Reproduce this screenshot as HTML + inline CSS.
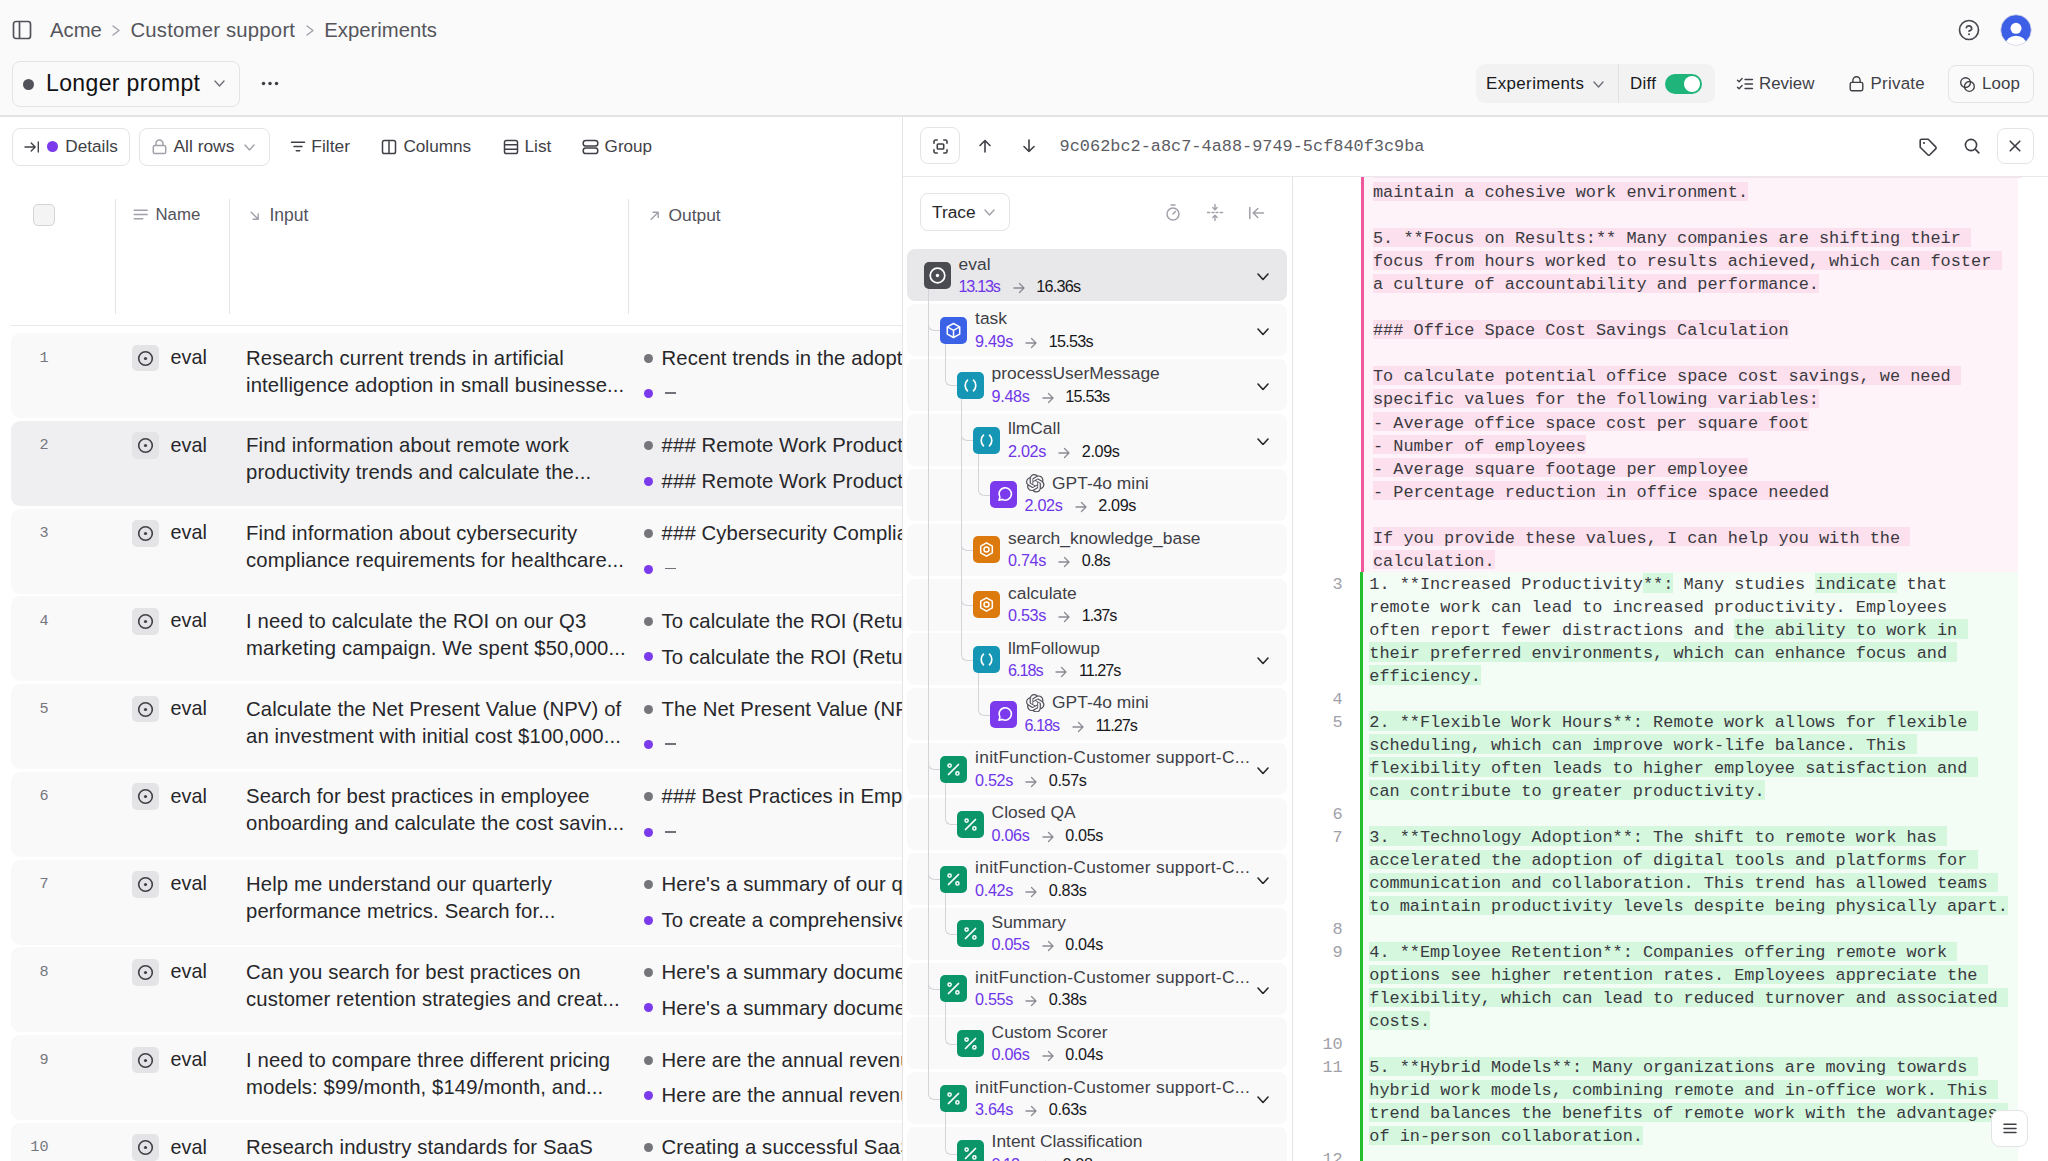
<!DOCTYPE html><html><head><meta charset="utf-8"><style>
html,body{margin:0;padding:0;width:2048px;height:1161px;overflow:hidden;background:#fff;}
.t{position:absolute;white-space:pre;line-height:1;}
.r{position:absolute;}
</style></head><body>

<div class="r" style="left:0.00px;top:0.00px;width:2048.00px;height:116.00px;background:#fafafa;border-radius:0px;"></div>
<div class="r" style="left:0.00px;top:115.00px;width:2048.00px;height:1.50px;background:#e4e4e7;border-radius:0px;"></div>
<svg class="r" style="left:12.00px;top:20.00px;" width="20.00" height="20.00" viewBox="0 0 20 20" fill="none"><rect x="1.5" y="1.5" width="17" height="17" rx="2.5" stroke="#52525b" stroke-width="1.7"/><line x1="7.5" y1="1.5" x2="7.5" y2="18.5" stroke="#52525b" stroke-width="1.7"/></svg>
<div class="t" style="left:50.00px;top:19.54px;font-size:20.30px;color:#55555c;font-family:'Liberation Sans',sans-serif;font-weight:400;">Acme</div>
<svg class="r" style="left:112.00px;top:25.00px;" width="8.00" height="11.00" viewBox="0 0 8 11" fill="none"><polyline points="1,1 7,5.5 1,10" stroke="#a1a1aa" stroke-width="1.4" fill="none" stroke-linecap="round" stroke-linejoin="round"/></svg>
<div class="t" style="left:130.40px;top:19.54px;font-size:20.30px;color:#55555c;font-family:'Liberation Sans',sans-serif;font-weight:400;letter-spacing:0.22766666666666613px;">Customer support</div>
<svg class="r" style="left:306.00px;top:25.00px;" width="8.00" height="11.00" viewBox="0 0 8 11" fill="none"><polyline points="1,1 7,5.5 1,10" stroke="#a1a1aa" stroke-width="1.4" fill="none" stroke-linecap="round" stroke-linejoin="round"/></svg>
<div class="t" style="left:324.30px;top:19.54px;font-size:20.30px;color:#55555c;font-family:'Liberation Sans',sans-serif;font-weight:400;">Experiments</div>
<svg class="r" style="left:1957.00px;top:18.00px;" width="24.00" height="24.00" viewBox="0 0 24 24" fill="none"><circle cx="12" cy="12" r="9.5" stroke="#46464d" stroke-width="1.65"/><path d="M9.3 9.6a2.8 2.8 0 0 1 5.4 1c0 1.8-2.7 2.5-2.7 2.5" stroke="#46464d" stroke-width="1.65" stroke-linecap="round" fill="none"/><circle cx="12" cy="16.3" r="1" fill="#46464d"/></svg>
<svg class="r" style="left:1999.50px;top:14.00px;" width="32.00" height="32.00" viewBox="0 0 32 32" fill="none"><defs><clipPath id="av"><circle cx="16" cy="16" r="15.3"/></clipPath></defs><circle cx="16" cy="16" r="15.3" fill="#3d5fe6"/><g clip-path="url(#av)"><circle cx="16" cy="14.3" r="5.5" fill="#fff"/><ellipse cx="16" cy="30.5" rx="10.5" ry="8.8" fill="#fff"/></g><circle cx="16" cy="16" r="15.3" stroke="#e4e4e7" stroke-width="0.8" fill="none"/></svg>
<div class="r" style="left:12.00px;top:60.50px;width:227.50px;height:46.00px;background:#fafafa;border-radius:8px;border:1.3px solid #e4e4e7;box-sizing:border-box;"></div>
<div class="r" style="left:23.00px;top:78.50px;width:11.00px;height:11.00px;background:#52525b;border-radius:6px;"></div>
<div class="t" style="left:46.00px;top:72.05px;font-size:23.00px;color:#111113;font-family:'Liberation Sans',sans-serif;font-weight:400;letter-spacing:0.3654166666666659px;">Longer prompt</div>
<svg class="r" style="left:214.00px;top:80.00px;" width="11.00" height="7.00" viewBox="0 0 11 7" fill="none"><polyline points="1,1 5.5,6 10,1" stroke="#71717a" stroke-width="1.4" fill="none" stroke-linecap="round" stroke-linejoin="round"/></svg>
<svg class="r" style="left:258.00px;top:79.00px;" width="24.00" height="9.00" viewBox="0 0 24 9" fill="none"><circle cx="5.5" cy="4.5" r="1.75" fill="#3f3f46"/><circle cx="12" cy="4.5" r="1.75" fill="#3f3f46"/><circle cx="18.5" cy="4.5" r="1.75" fill="#3f3f46"/></svg>
<div class="r" style="left:1475.50px;top:64.00px;width:239.50px;height:39.00px;background:#f2f2f3;border-radius:9px;"></div>
<div class="r" style="left:1617.50px;top:64.00px;width:1.50px;height:39.00px;background:#e1e1e4;border-radius:0px;"></div>
<div class="t" style="left:1486.00px;top:75.84px;font-size:16.90px;color:#18181b;font-family:'Liberation Sans',sans-serif;font-weight:400;letter-spacing:0.40360000000000157px;">Experiments</div>
<svg class="r" style="left:1592.50px;top:80.50px;" width="11.00" height="7.00" viewBox="0 0 11 7" fill="none"><polyline points="1,1 5.5,6 10,1" stroke="#71717a" stroke-width="1.4" fill="none" stroke-linecap="round" stroke-linejoin="round"/></svg>
<div class="t" style="left:1630.00px;top:75.84px;font-size:16.90px;color:#18181b;font-family:'Liberation Sans',sans-serif;font-weight:400;letter-spacing:0.301166666666667px;">Diff</div>
<div class="r" style="left:1664.50px;top:74.00px;width:37.00px;height:19.50px;background:#1fb57a;border-radius:10px;"></div>
<div class="r" style="left:1684.00px;top:76.00px;width:16.00px;height:16.00px;background:#ffffff;border-radius:8px;"></div>
<svg class="r" style="left:1736.00px;top:76.00px;" width="18.00" height="16.00" viewBox="0 0 18 16" fill="none"><path d="M1.5 4.2l1.6 1.6 3-3.3M1.5 11.2l1.6 1.6 3-3.3" stroke="#3f3f46" stroke-width="1.35" stroke-linecap="round" stroke-linejoin="round" fill="none"/><path d="M9 3.5h7.5M9 8h7.5M9 12.5h7.5" stroke="#3f3f46" stroke-width="1.35" stroke-linecap="round"/></svg>
<div class="t" style="left:1759.00px;top:75.84px;font-size:16.90px;color:#3f3f46;font-family:'Liberation Sans',sans-serif;font-weight:400;letter-spacing:0.01360000000000099px;">Review</div>
<svg class="r" style="left:1848.00px;top:75.00px;" width="17.00" height="17.00" viewBox="0 0 17 17" fill="none"><rect x="2.2" y="7.4" width="12.6" height="8.3" rx="1.6" stroke="#3f3f46" stroke-width="1.4"/><path d="M4.9 7.4V5.3a3.6 3.6 0 0 1 7.2 0v2.1" stroke="#3f3f46" stroke-width="1.4"/></svg>
<div class="t" style="left:1870.50px;top:75.84px;font-size:16.90px;color:#3f3f46;font-family:'Liberation Sans',sans-serif;font-weight:400;letter-spacing:0.2735000000000021px;">Private</div>
<div class="r" style="left:1947.50px;top:65.00px;width:86.50px;height:37.50px;background:#fafafa;border-radius:8px;border:1.3px solid #e4e4e7;box-sizing:border-box;"></div>
<svg class="r" style="left:1959.00px;top:76.00px;" width="17.00" height="17.00" viewBox="0 0 17 17" fill="none"><circle cx="6.6" cy="6.6" r="4.9" stroke="#3f3f46" stroke-width="1.35"/><circle cx="10.4" cy="10.4" r="4.9" stroke="#3f3f46" stroke-width="1.35"/></svg>
<div class="t" style="left:1982.00px;top:75.84px;font-size:16.90px;color:#3f3f46;font-family:'Liberation Sans',sans-serif;font-weight:400;letter-spacing:0.09916666666666647px;">Loop</div>
<div class="r" style="left:11.50px;top:128.00px;width:118.00px;height:37.50px;background:#fff;border-radius:8px;border:1.3px solid #e4e4e7;box-sizing:border-box;"></div>
<svg class="r" style="left:24.00px;top:140.50px;" width="16.00" height="12.00" viewBox="0 0 16 12" fill="none"><path d="M1 6h10M7.2 2l4 4-4 4" stroke="#3f3f46" stroke-width="1.35" stroke-linecap="round" stroke-linejoin="round" fill="none"/><path d="M14.3 1v10" stroke="#3f3f46" stroke-width="1.35" stroke-linecap="round"/></svg>
<div class="r" style="left:46.50px;top:141.00px;width:11.30px;height:11.30px;background:#7c3aed;border-radius:6px;"></div>
<div class="t" style="left:65.30px;top:138.28px;font-size:17.20px;color:#3f3f46;font-family:'Liberation Sans',sans-serif;font-weight:400;">Details</div>
<div class="r" style="left:139.00px;top:128.00px;width:130.50px;height:37.50px;background:#fff;border-radius:8px;border:1.3px solid #e4e4e7;box-sizing:border-box;"></div>
<svg class="r" style="left:151.00px;top:138.00px;" width="17.00" height="17.00" viewBox="0 0 17 17" fill="none"><rect x="2.3" y="7.6" width="12.4" height="8" rx="1.6" stroke="#a1a1aa" stroke-width="1.5"/><path d="M5 7.6V5.4a3.5 3.5 0 0 1 7 0v2.2" stroke="#a1a1aa" stroke-width="1.5"/></svg>
<div class="t" style="left:173.50px;top:138.11px;font-size:17.40px;color:#3f3f46;font-family:'Liberation Sans',sans-serif;font-weight:400;">All rows</div>
<svg class="r" style="left:244.00px;top:143.50px;" width="11.00" height="7.00" viewBox="0 0 11 7" fill="none"><polyline points="1,1 5.5,6 10,1" stroke="#a1a1aa" stroke-width="1.4" fill="none" stroke-linecap="round" stroke-linejoin="round"/></svg>
<svg class="r" style="left:289.50px;top:140.00px;" width="16.00" height="13.00" viewBox="0 0 16 13" fill="none"><path d="M1.5 2.2h13M4 6.5h8M6.3 10.8h3.4" stroke="#3f3f46" stroke-width="1.5" stroke-linecap="round"/></svg>
<div class="t" style="left:311.30px;top:138.11px;font-size:17.40px;color:#3f3f46;font-family:'Liberation Sans',sans-serif;font-weight:400;">Filter</div>
<svg class="r" style="left:380.50px;top:139.00px;" width="16.00" height="16.00" viewBox="0 0 16 16" fill="none"><rect x="1.5" y="1.5" width="13" height="13" rx="1.8" stroke="#3f3f46" stroke-width="1.5"/><path d="M8 1.5v13" stroke="#3f3f46" stroke-width="1.5"/></svg>
<div class="t" style="left:403.40px;top:138.28px;font-size:17.20px;color:#3f3f46;font-family:'Liberation Sans',sans-serif;font-weight:400;">Columns</div>
<svg class="r" style="left:502.50px;top:139.00px;" width="16.00" height="16.00" viewBox="0 0 16 16" fill="none"><rect x="1.5" y="1.5" width="13" height="13" rx="1.8" stroke="#3f3f46" stroke-width="1.5"/><path d="M1.5 5.8h13M1.5 10.2h13" stroke="#3f3f46" stroke-width="1.5"/></svg>
<div class="t" style="left:524.50px;top:138.19px;font-size:17.30px;color:#3f3f46;font-family:'Liberation Sans',sans-serif;font-weight:400;">List</div>
<svg class="r" style="left:582.00px;top:139.00px;" width="17.00" height="16.00" viewBox="0 0 17 16" fill="none"><rect x="1.2" y="1.5" width="14.6" height="5.6" rx="2.6" stroke="#3f3f46" stroke-width="1.5"/><rect x="1.2" y="8.9" width="14.6" height="5.6" rx="2.6" stroke="#3f3f46" stroke-width="1.5"/></svg>
<div class="t" style="left:604.60px;top:138.37px;font-size:17.10px;color:#3f3f46;font-family:'Liberation Sans',sans-serif;font-weight:400;">Group</div>
<div class="r" style="left:33.00px;top:204.30px;width:21.50px;height:21.30px;background:#f4f4f5;border-radius:5px;border:1.3px solid #d4d4d8;box-sizing:border-box;"></div>
<div class="r" style="left:115.00px;top:199.00px;width:1.30px;height:115.00px;background:#e4e4e7;border-radius:0px;"></div>
<div class="r" style="left:229.00px;top:199.00px;width:1.30px;height:115.00px;background:#e4e4e7;border-radius:0px;"></div>
<div class="r" style="left:628.00px;top:199.00px;width:1.30px;height:115.00px;background:#e4e4e7;border-radius:0px;"></div>
<svg class="r" style="left:133.00px;top:208.00px;" width="16.00" height="13.00" viewBox="0 0 16 13" fill="none"><path d="M1.2 2.2h13M1.2 6.5h13M1.2 10.8h8.5" stroke="#a1a1aa" stroke-width="1.5" stroke-linecap="round"/></svg>
<div class="t" style="left:155.50px;top:207.22px;font-size:16.80px;color:#52525b;font-family:'Liberation Sans',sans-serif;font-weight:400;">Name</div>
<svg class="r" style="left:250.00px;top:211.00px;" width="10.00" height="9.00" viewBox="0 0 10 9" fill="none"><path d="M1.2 1.2l7 7M8.2 3v5.2H3" stroke="#a1a1aa" stroke-width="1.4" stroke-linecap="round" stroke-linejoin="round" fill="none"/></svg>
<div class="t" style="left:269.40px;top:206.62px;font-size:17.50px;color:#52525b;font-family:'Liberation Sans',sans-serif;font-weight:400;">Input</div>
<svg class="r" style="left:649.50px;top:211.00px;" width="10.00" height="9.00" viewBox="0 0 10 9" fill="none"><path d="M1.2 8.2l7-7M3 1.2h5.2v5.2" stroke="#a1a1aa" stroke-width="1.4" stroke-linecap="round" stroke-linejoin="round" fill="none"/></svg>
<div class="t" style="left:668.50px;top:206.71px;font-size:17.40px;color:#52525b;font-family:'Liberation Sans',sans-serif;font-weight:400;">Output</div>
<div class="r" style="left:11.00px;top:325.00px;width:891.00px;height:1.30px;background:#e9e9ec;border-radius:0px;"></div>
<div class="r" style="left:0;top:326px;width:902px;height:835px;overflow:hidden;">
<div class="r" style="left:11.00px;top:7.20px;width:909.00px;height:84.90px;background:#f9f9fa;border-radius:9px;"></div>
<div class="t" style="left:39.48px;top:24.65px;font-size:15.20px;color:#76767e;font-family:'Liberation Mono',monospace;font-weight:400;">1</div>
<div class="r" style="left:131.80px;top:18.70px;width:26.80px;height:26.80px;background:#e4e4e7;border-radius:5px;"></div>
<svg class="r" style="left:136.70px;top:23.60px;" width="17.00" height="17.00" viewBox="0 0 17 17" fill="none"><circle cx="8.5" cy="8.5" r="6.8" stroke="#3f3f46" stroke-width="1.6"/><circle cx="8.5" cy="8.5" r="1.6" fill="#3f3f46"/></svg>
<div class="t" style="left:170.60px;top:21.97px;font-size:19.80px;color:#27272a;font-family:'Liberation Sans',sans-serif;font-weight:400;">eval</div>
<div class="t" style="left:246.00px;top:21.55px;font-size:20.30px;color:#27272a;font-family:'Liberation Sans',sans-serif;font-weight:400;letter-spacing:0.12px;">Research current trends in artificial</div>
<div class="t" style="left:246.00px;top:48.64px;font-size:20.30px;color:#27272a;font-family:'Liberation Sans',sans-serif;font-weight:400;letter-spacing:0.12px;">intelligence adoption in small businesse...</div>
<div class="r" style="left:644.00px;top:27.70px;width:9.00px;height:9.00px;background:#75757c;border-radius:5px;"></div>
<div class="t" style="left:661.60px;top:21.55px;font-size:20.30px;color:#27272a;font-family:'Liberation Sans',sans-serif;font-weight:400;letter-spacing:0.12px;">Recent trends in the adoption of artificial</div>
<div class="r" style="left:644.00px;top:63.20px;width:9.00px;height:9.00px;background:#7c3aed;border-radius:5px;"></div>
<div class="r" style="left:665.00px;top:66.40px;width:11.00px;height:1.50px;background:#71717a;border-radius:0px;"></div>
<div class="r" style="left:11.00px;top:94.95px;width:909.00px;height:84.90px;background:#efeff1;border-radius:9px;"></div>
<div class="t" style="left:39.48px;top:112.40px;font-size:15.20px;color:#76767e;font-family:'Liberation Mono',monospace;font-weight:400;">2</div>
<div class="r" style="left:131.80px;top:106.45px;width:26.80px;height:26.80px;background:#e4e4e7;border-radius:5px;"></div>
<svg class="r" style="left:136.70px;top:111.35px;" width="17.00" height="17.00" viewBox="0 0 17 17" fill="none"><circle cx="8.5" cy="8.5" r="6.8" stroke="#3f3f46" stroke-width="1.6"/><circle cx="8.5" cy="8.5" r="1.6" fill="#3f3f46"/></svg>
<div class="t" style="left:170.60px;top:109.72px;font-size:19.80px;color:#27272a;font-family:'Liberation Sans',sans-serif;font-weight:400;">eval</div>
<div class="t" style="left:246.00px;top:109.30px;font-size:20.30px;color:#27272a;font-family:'Liberation Sans',sans-serif;font-weight:400;letter-spacing:0.12px;">Find information about remote work</div>
<div class="t" style="left:246.00px;top:136.39px;font-size:20.30px;color:#27272a;font-family:'Liberation Sans',sans-serif;font-weight:400;letter-spacing:0.12px;">productivity trends and calculate the...</div>
<div class="r" style="left:644.00px;top:115.45px;width:9.00px;height:9.00px;background:#75757c;border-radius:5px;"></div>
<div class="t" style="left:661.60px;top:109.30px;font-size:20.30px;color:#27272a;font-family:'Liberation Sans',sans-serif;font-weight:400;letter-spacing:0.12px;">### Remote Work Productivity</div>
<div class="r" style="left:644.00px;top:150.95px;width:9.00px;height:9.00px;background:#7c3aed;border-radius:5px;"></div>
<div class="t" style="left:661.60px;top:145.00px;font-size:20.30px;color:#27272a;font-family:'Liberation Sans',sans-serif;font-weight:400;letter-spacing:0.12px;">### Remote Work Productivity</div>
<div class="r" style="left:11.00px;top:182.70px;width:909.00px;height:84.90px;background:#f9f9fa;border-radius:9px;"></div>
<div class="t" style="left:39.48px;top:200.15px;font-size:15.20px;color:#76767e;font-family:'Liberation Mono',monospace;font-weight:400;">3</div>
<div class="r" style="left:131.80px;top:194.20px;width:26.80px;height:26.80px;background:#e4e4e7;border-radius:5px;"></div>
<svg class="r" style="left:136.70px;top:199.10px;" width="17.00" height="17.00" viewBox="0 0 17 17" fill="none"><circle cx="8.5" cy="8.5" r="6.8" stroke="#3f3f46" stroke-width="1.6"/><circle cx="8.5" cy="8.5" r="1.6" fill="#3f3f46"/></svg>
<div class="t" style="left:170.60px;top:197.47px;font-size:19.80px;color:#27272a;font-family:'Liberation Sans',sans-serif;font-weight:400;">eval</div>
<div class="t" style="left:246.00px;top:197.04px;font-size:20.30px;color:#27272a;font-family:'Liberation Sans',sans-serif;font-weight:400;letter-spacing:0.12px;">Find information about cybersecurity</div>
<div class="t" style="left:246.00px;top:224.14px;font-size:20.30px;color:#27272a;font-family:'Liberation Sans',sans-serif;font-weight:400;letter-spacing:0.12px;">compliance requirements for healthcare...</div>
<div class="r" style="left:644.00px;top:203.20px;width:9.00px;height:9.00px;background:#75757c;border-radius:5px;"></div>
<div class="t" style="left:661.60px;top:197.04px;font-size:20.30px;color:#27272a;font-family:'Liberation Sans',sans-serif;font-weight:400;letter-spacing:0.12px;">### Cybersecurity Compliance</div>
<div class="r" style="left:644.00px;top:238.70px;width:9.00px;height:9.00px;background:#7c3aed;border-radius:5px;"></div>
<div class="r" style="left:665.00px;top:241.90px;width:11.00px;height:1.50px;background:#71717a;border-radius:0px;"></div>
<div class="r" style="left:11.00px;top:270.45px;width:909.00px;height:84.90px;background:#f9f9fa;border-radius:9px;"></div>
<div class="t" style="left:39.48px;top:287.90px;font-size:15.20px;color:#76767e;font-family:'Liberation Mono',monospace;font-weight:400;">4</div>
<div class="r" style="left:131.80px;top:281.95px;width:26.80px;height:26.80px;background:#e4e4e7;border-radius:5px;"></div>
<svg class="r" style="left:136.70px;top:286.85px;" width="17.00" height="17.00" viewBox="0 0 17 17" fill="none"><circle cx="8.5" cy="8.5" r="6.8" stroke="#3f3f46" stroke-width="1.6"/><circle cx="8.5" cy="8.5" r="1.6" fill="#3f3f46"/></svg>
<div class="t" style="left:170.60px;top:285.22px;font-size:19.80px;color:#27272a;font-family:'Liberation Sans',sans-serif;font-weight:400;">eval</div>
<div class="t" style="left:246.00px;top:284.80px;font-size:20.30px;color:#27272a;font-family:'Liberation Sans',sans-serif;font-weight:400;letter-spacing:0.12px;">I need to calculate the ROI on our Q3</div>
<div class="t" style="left:246.00px;top:311.90px;font-size:20.30px;color:#27272a;font-family:'Liberation Sans',sans-serif;font-weight:400;letter-spacing:0.12px;">marketing campaign. We spent $50,000...</div>
<div class="r" style="left:644.00px;top:290.95px;width:9.00px;height:9.00px;background:#75757c;border-radius:5px;"></div>
<div class="t" style="left:661.60px;top:284.80px;font-size:20.30px;color:#27272a;font-family:'Liberation Sans',sans-serif;font-weight:400;letter-spacing:0.12px;">To calculate the ROI (Return on</div>
<div class="r" style="left:644.00px;top:326.45px;width:9.00px;height:9.00px;background:#7c3aed;border-radius:5px;"></div>
<div class="t" style="left:661.60px;top:320.50px;font-size:20.30px;color:#27272a;font-family:'Liberation Sans',sans-serif;font-weight:400;letter-spacing:0.12px;">To calculate the ROI (Return on</div>
<div class="r" style="left:11.00px;top:358.20px;width:909.00px;height:84.90px;background:#f9f9fa;border-radius:9px;"></div>
<div class="t" style="left:39.48px;top:375.65px;font-size:15.20px;color:#76767e;font-family:'Liberation Mono',monospace;font-weight:400;">5</div>
<div class="r" style="left:131.80px;top:369.70px;width:26.80px;height:26.80px;background:#e4e4e7;border-radius:5px;"></div>
<svg class="r" style="left:136.70px;top:374.60px;" width="17.00" height="17.00" viewBox="0 0 17 17" fill="none"><circle cx="8.5" cy="8.5" r="6.8" stroke="#3f3f46" stroke-width="1.6"/><circle cx="8.5" cy="8.5" r="1.6" fill="#3f3f46"/></svg>
<div class="t" style="left:170.60px;top:372.97px;font-size:19.80px;color:#27272a;font-family:'Liberation Sans',sans-serif;font-weight:400;">eval</div>
<div class="t" style="left:246.00px;top:372.55px;font-size:20.30px;color:#27272a;font-family:'Liberation Sans',sans-serif;font-weight:400;letter-spacing:0.12px;">Calculate the Net Present Value (NPV) of</div>
<div class="t" style="left:246.00px;top:399.65px;font-size:20.30px;color:#27272a;font-family:'Liberation Sans',sans-serif;font-weight:400;letter-spacing:0.12px;">an investment with initial cost $100,000...</div>
<div class="r" style="left:644.00px;top:378.70px;width:9.00px;height:9.00px;background:#75757c;border-radius:5px;"></div>
<div class="t" style="left:661.60px;top:372.55px;font-size:20.30px;color:#27272a;font-family:'Liberation Sans',sans-serif;font-weight:400;letter-spacing:0.12px;">The Net Present Value (NPV)</div>
<div class="r" style="left:644.00px;top:414.20px;width:9.00px;height:9.00px;background:#7c3aed;border-radius:5px;"></div>
<div class="r" style="left:665.00px;top:417.40px;width:11.00px;height:1.50px;background:#71717a;border-radius:0px;"></div>
<div class="r" style="left:11.00px;top:445.95px;width:909.00px;height:84.90px;background:#f9f9fa;border-radius:9px;"></div>
<div class="t" style="left:39.48px;top:463.40px;font-size:15.20px;color:#76767e;font-family:'Liberation Mono',monospace;font-weight:400;">6</div>
<div class="r" style="left:131.80px;top:457.45px;width:26.80px;height:26.80px;background:#e4e4e7;border-radius:5px;"></div>
<svg class="r" style="left:136.70px;top:462.35px;" width="17.00" height="17.00" viewBox="0 0 17 17" fill="none"><circle cx="8.5" cy="8.5" r="6.8" stroke="#3f3f46" stroke-width="1.6"/><circle cx="8.5" cy="8.5" r="1.6" fill="#3f3f46"/></svg>
<div class="t" style="left:170.60px;top:460.72px;font-size:19.80px;color:#27272a;font-family:'Liberation Sans',sans-serif;font-weight:400;">eval</div>
<div class="t" style="left:246.00px;top:460.30px;font-size:20.30px;color:#27272a;font-family:'Liberation Sans',sans-serif;font-weight:400;letter-spacing:0.12px;">Search for best practices in employee</div>
<div class="t" style="left:246.00px;top:487.40px;font-size:20.30px;color:#27272a;font-family:'Liberation Sans',sans-serif;font-weight:400;letter-spacing:0.12px;">onboarding and calculate the cost savin...</div>
<div class="r" style="left:644.00px;top:466.45px;width:9.00px;height:9.00px;background:#75757c;border-radius:5px;"></div>
<div class="t" style="left:661.60px;top:460.30px;font-size:20.30px;color:#27272a;font-family:'Liberation Sans',sans-serif;font-weight:400;letter-spacing:0.12px;">### Best Practices in Employee</div>
<div class="r" style="left:644.00px;top:501.95px;width:9.00px;height:9.00px;background:#7c3aed;border-radius:5px;"></div>
<div class="r" style="left:665.00px;top:505.15px;width:11.00px;height:1.50px;background:#71717a;border-radius:0px;"></div>
<div class="r" style="left:11.00px;top:533.70px;width:909.00px;height:84.90px;background:#f9f9fa;border-radius:9px;"></div>
<div class="t" style="left:39.48px;top:551.15px;font-size:15.20px;color:#76767e;font-family:'Liberation Mono',monospace;font-weight:400;">7</div>
<div class="r" style="left:131.80px;top:545.20px;width:26.80px;height:26.80px;background:#e4e4e7;border-radius:5px;"></div>
<svg class="r" style="left:136.70px;top:550.10px;" width="17.00" height="17.00" viewBox="0 0 17 17" fill="none"><circle cx="8.5" cy="8.5" r="6.8" stroke="#3f3f46" stroke-width="1.6"/><circle cx="8.5" cy="8.5" r="1.6" fill="#3f3f46"/></svg>
<div class="t" style="left:170.60px;top:548.47px;font-size:19.80px;color:#27272a;font-family:'Liberation Sans',sans-serif;font-weight:400;">eval</div>
<div class="t" style="left:246.00px;top:548.05px;font-size:20.30px;color:#27272a;font-family:'Liberation Sans',sans-serif;font-weight:400;letter-spacing:0.12px;">Help me understand our quarterly</div>
<div class="t" style="left:246.00px;top:575.15px;font-size:20.30px;color:#27272a;font-family:'Liberation Sans',sans-serif;font-weight:400;letter-spacing:0.12px;">performance metrics. Search for...</div>
<div class="r" style="left:644.00px;top:554.20px;width:9.00px;height:9.00px;background:#75757c;border-radius:5px;"></div>
<div class="t" style="left:661.60px;top:548.05px;font-size:20.30px;color:#27272a;font-family:'Liberation Sans',sans-serif;font-weight:400;letter-spacing:0.12px;">Here&#x27;s a summary of our quarterly</div>
<div class="r" style="left:644.00px;top:589.70px;width:9.00px;height:9.00px;background:#7c3aed;border-radius:5px;"></div>
<div class="t" style="left:661.60px;top:583.75px;font-size:20.30px;color:#27272a;font-family:'Liberation Sans',sans-serif;font-weight:400;letter-spacing:0.12px;">To create a comprehensive report</div>
<div class="r" style="left:11.00px;top:621.45px;width:909.00px;height:84.90px;background:#f9f9fa;border-radius:9px;"></div>
<div class="t" style="left:39.48px;top:638.90px;font-size:15.20px;color:#76767e;font-family:'Liberation Mono',monospace;font-weight:400;">8</div>
<div class="r" style="left:131.80px;top:632.95px;width:26.80px;height:26.80px;background:#e4e4e7;border-radius:5px;"></div>
<svg class="r" style="left:136.70px;top:637.85px;" width="17.00" height="17.00" viewBox="0 0 17 17" fill="none"><circle cx="8.5" cy="8.5" r="6.8" stroke="#3f3f46" stroke-width="1.6"/><circle cx="8.5" cy="8.5" r="1.6" fill="#3f3f46"/></svg>
<div class="t" style="left:170.60px;top:636.22px;font-size:19.80px;color:#27272a;font-family:'Liberation Sans',sans-serif;font-weight:400;">eval</div>
<div class="t" style="left:246.00px;top:635.80px;font-size:20.30px;color:#27272a;font-family:'Liberation Sans',sans-serif;font-weight:400;letter-spacing:0.12px;">Can you search for best practices on</div>
<div class="t" style="left:246.00px;top:662.90px;font-size:20.30px;color:#27272a;font-family:'Liberation Sans',sans-serif;font-weight:400;letter-spacing:0.12px;">customer retention strategies and creat...</div>
<div class="r" style="left:644.00px;top:641.95px;width:9.00px;height:9.00px;background:#75757c;border-radius:5px;"></div>
<div class="t" style="left:661.60px;top:635.80px;font-size:20.30px;color:#27272a;font-family:'Liberation Sans',sans-serif;font-weight:400;letter-spacing:0.12px;">Here&#x27;s a summary document</div>
<div class="r" style="left:644.00px;top:677.45px;width:9.00px;height:9.00px;background:#7c3aed;border-radius:5px;"></div>
<div class="t" style="left:661.60px;top:671.50px;font-size:20.30px;color:#27272a;font-family:'Liberation Sans',sans-serif;font-weight:400;letter-spacing:0.12px;">Here&#x27;s a summary document</div>
<div class="r" style="left:11.00px;top:709.20px;width:909.00px;height:84.90px;background:#f9f9fa;border-radius:9px;"></div>
<div class="t" style="left:39.48px;top:726.65px;font-size:15.20px;color:#76767e;font-family:'Liberation Mono',monospace;font-weight:400;">9</div>
<div class="r" style="left:131.80px;top:720.70px;width:26.80px;height:26.80px;background:#e4e4e7;border-radius:5px;"></div>
<svg class="r" style="left:136.70px;top:725.60px;" width="17.00" height="17.00" viewBox="0 0 17 17" fill="none"><circle cx="8.5" cy="8.5" r="6.8" stroke="#3f3f46" stroke-width="1.6"/><circle cx="8.5" cy="8.5" r="1.6" fill="#3f3f46"/></svg>
<div class="t" style="left:170.60px;top:723.97px;font-size:19.80px;color:#27272a;font-family:'Liberation Sans',sans-serif;font-weight:400;">eval</div>
<div class="t" style="left:246.00px;top:723.54px;font-size:20.30px;color:#27272a;font-family:'Liberation Sans',sans-serif;font-weight:400;letter-spacing:0.12px;">I need to compare three different pricing</div>
<div class="t" style="left:246.00px;top:750.65px;font-size:20.30px;color:#27272a;font-family:'Liberation Sans',sans-serif;font-weight:400;letter-spacing:0.12px;">models: $99/month, $149/month, and...</div>
<div class="r" style="left:644.00px;top:729.70px;width:9.00px;height:9.00px;background:#75757c;border-radius:5px;"></div>
<div class="t" style="left:661.60px;top:723.54px;font-size:20.30px;color:#27272a;font-family:'Liberation Sans',sans-serif;font-weight:400;letter-spacing:0.12px;">Here are the annual revenue</div>
<div class="r" style="left:644.00px;top:765.20px;width:9.00px;height:9.00px;background:#7c3aed;border-radius:5px;"></div>
<div class="t" style="left:661.60px;top:759.25px;font-size:20.30px;color:#27272a;font-family:'Liberation Sans',sans-serif;font-weight:400;letter-spacing:0.12px;">Here are the annual revenue</div>
<div class="r" style="left:11.00px;top:796.95px;width:909.00px;height:84.90px;background:#f9f9fa;border-radius:9px;"></div>
<div class="t" style="left:30.36px;top:814.40px;font-size:15.20px;color:#76767e;font-family:'Liberation Mono',monospace;font-weight:400;">10</div>
<div class="r" style="left:131.80px;top:808.45px;width:26.80px;height:26.80px;background:#e4e4e7;border-radius:5px;"></div>
<svg class="r" style="left:136.70px;top:813.35px;" width="17.00" height="17.00" viewBox="0 0 17 17" fill="none"><circle cx="8.5" cy="8.5" r="6.8" stroke="#3f3f46" stroke-width="1.6"/><circle cx="8.5" cy="8.5" r="1.6" fill="#3f3f46"/></svg>
<div class="t" style="left:170.60px;top:811.72px;font-size:19.80px;color:#27272a;font-family:'Liberation Sans',sans-serif;font-weight:400;">eval</div>
<div class="t" style="left:246.00px;top:811.29px;font-size:20.30px;color:#27272a;font-family:'Liberation Sans',sans-serif;font-weight:400;letter-spacing:0.12px;">Research industry standards for SaaS</div>
<div class="t" style="left:246.00px;top:838.40px;font-size:20.30px;color:#27272a;font-family:'Liberation Sans',sans-serif;font-weight:400;letter-spacing:0.12px;">pricing models and calculate...</div>
<div class="r" style="left:644.00px;top:817.45px;width:9.00px;height:9.00px;background:#75757c;border-radius:5px;"></div>
<div class="t" style="left:661.60px;top:811.29px;font-size:20.30px;color:#27272a;font-family:'Liberation Sans',sans-serif;font-weight:400;letter-spacing:0.12px;">Creating a successful SaaS</div>
<div class="r" style="left:644.00px;top:852.95px;width:9.00px;height:9.00px;background:#7c3aed;border-radius:5px;"></div>
<div class="r" style="left:665.00px;top:856.15px;width:11.00px;height:1.50px;background:#71717a;border-radius:0px;"></div>
</div>
<div class="r" style="left:902.00px;top:116.00px;width:1.30px;height:1045.00px;background:#e4e4e7;border-radius:0px;"></div>
<div class="r" style="left:903.30px;top:175.50px;width:1144.70px;height:1.30px;background:#e9e9ec;border-radius:0px;"></div>
<div class="r" style="left:919.70px;top:127.00px;width:40.00px;height:37.30px;background:#fff;border-radius:8px;border:1.3px solid #e4e4e7;box-sizing:border-box;"></div>
<svg class="r" style="left:931.50px;top:137.50px;" width="17.00" height="17.00" viewBox="0 0 17 17" fill="none"><path d="M2 5.2V3.6A1.6 1.6 0 0 1 3.6 2h1.6M11.8 2h1.6A1.6 1.6 0 0 1 15 3.6v1.6M15 11.8v1.6a1.6 1.6 0 0 1-1.6 1.6h-1.6M5.2 15H3.6A1.6 1.6 0 0 1 2 13.4v-1.6" stroke="#3f3f46" stroke-width="1.6" stroke-linecap="round"/><rect x="5.3" y="6" width="6.4" height="5" rx="0.8" stroke="#3f3f46" stroke-width="1.6"/></svg>
<svg class="r" style="left:978.00px;top:139.00px;" width="14.00" height="14.00" viewBox="0 0 14 14" fill="none"><path d="M7 13V1.5M2 6.5l5-5 5 5" stroke="#3f3f46" stroke-width="1.6" stroke-linecap="round" stroke-linejoin="round" fill="none"/></svg>
<svg class="r" style="left:1021.50px;top:139.00px;" width="14.00" height="14.00" viewBox="0 0 14 14" fill="none"><path d="M7 1V12.5M2 7.5l5 5 5-5" stroke="#3f3f46" stroke-width="1.6" stroke-linecap="round" stroke-linejoin="round" fill="none"/></svg>
<div class="t" style="left:1059.60px;top:138.56px;font-size:16.90px;color:#5c5c64;font-family:'Liberation Mono',monospace;font-weight:400;">9c062bc2-a8c7-4a88-9749-5cf840f3c9ba</div>
<svg class="r" style="left:1918.00px;top:136.50px;" width="19.00" height="19.00" viewBox="0 0 19 19" fill="none"><path d="M10.2 2.2H3.6A1.4 1.4 0 0 0 2.2 3.6v6.6l7.6 7.6a1.4 1.4 0 0 0 2 0l5.9-5.9a1.4 1.4 0 0 0 0-2z" stroke="#3f3f46" stroke-width="1.6" stroke-linejoin="round"/><circle cx="6" cy="6" r="1.1" fill="#3f3f46"/></svg>
<svg class="r" style="left:1964.00px;top:138.00px;" width="16.00" height="16.00" viewBox="0 0 16 16" fill="none"><circle cx="7" cy="7" r="5.6" stroke="#3f3f46" stroke-width="1.6"/><path d="M11.2 11.2l3.6 3.6" stroke="#3f3f46" stroke-width="1.7" stroke-linecap="round"/></svg>
<div class="r" style="left:1996.70px;top:127.70px;width:37.10px;height:36.20px;background:#fff;border-radius:8px;border:1.3px solid #e4e4e7;box-sizing:border-box;"></div>
<svg class="r" style="left:2009.00px;top:140.00px;" width="12.00" height="12.00" viewBox="0 0 12 12" fill="none"><path d="M1.2 1.2l9.6 9.6M10.8 1.2L1.2 10.8" stroke="#3f3f46" stroke-width="1.6" stroke-linecap="round"/></svg>
<div class="r" style="left:1292.00px;top:176.80px;width:1.30px;height:984.20px;background:#e4e4e7;border-radius:0px;"></div>
<div class="r" style="left:919.70px;top:193.40px;width:89.90px;height:37.50px;background:#fff;border-radius:8px;border:1.3px solid #e4e4e7;box-sizing:border-box;"></div>
<div class="t" style="left:932.00px;top:203.79px;font-size:17.30px;color:#27272a;font-family:'Liberation Sans',sans-serif;font-weight:400;">Trace</div>
<svg class="r" style="left:984.00px;top:209.00px;" width="11.00" height="7.00" viewBox="0 0 11 7" fill="none"><polyline points="1,1 5.5,6 10,1" stroke="#a1a1aa" stroke-width="1.4" fill="none" stroke-linecap="round" stroke-linejoin="round"/></svg>
<svg class="r" style="left:1165.00px;top:202.00px;" width="16.00" height="20.00" viewBox="0 0 16 20" fill="none"><path d="M6 3h4" stroke="#a1a1aa" stroke-width="1.5" stroke-linecap="round"/><circle cx="8" cy="12" r="6" stroke="#a1a1aa" stroke-width="1.5"/><path d="M8 12l2.3-2.5" stroke="#a1a1aa" stroke-width="1.5" stroke-linecap="round"/></svg>
<svg class="r" style="left:1205.50px;top:203.00px;" width="18.00" height="19.00" viewBox="0 0 18 19" fill="none"><path d="M1.5 9.5h2.2M6 9.5h2M10 9.5h2M14.3 9.5h2.2" stroke="#a1a1aa" stroke-width="1.4" stroke-linecap="round"/><path d="M9 1.5v5.2M6.8 4.6L9 6.8l2.2-2.2M9 17.5v-5.2M6.8 14.4L9 12.2l2.2 2.2" stroke="#a1a1aa" stroke-width="1.4" stroke-linecap="round" stroke-linejoin="round" fill="none"/></svg>
<svg class="r" style="left:1247.50px;top:205.50px;" width="17.00" height="14.00" viewBox="0 0 17 14" fill="none"><path d="M1.8 1.5v11" stroke="#a1a1aa" stroke-width="1.5" stroke-linecap="round"/><path d="M15.5 7H5.2M9.8 2.5L5.2 7l4.6 4.5" stroke="#a1a1aa" stroke-width="1.5" stroke-linecap="round" stroke-linejoin="round" fill="none"/></svg>
<div class="r" style="left:907.00px;top:249.30px;width:380.30px;height:52.00px;background:#e8e8eb;border-radius:8px;"></div>
<div class="r" style="left:907.00px;top:304.17px;width:380.30px;height:52.00px;background:#f9f9fa;border-radius:8px;"></div>
<div class="r" style="left:907.00px;top:359.04px;width:380.30px;height:52.00px;background:#f9f9fa;border-radius:8px;"></div>
<div class="r" style="left:907.00px;top:413.91px;width:380.30px;height:52.00px;background:#f9f9fa;border-radius:8px;"></div>
<div class="r" style="left:907.00px;top:468.78px;width:380.30px;height:52.00px;background:#f9f9fa;border-radius:8px;"></div>
<div class="r" style="left:907.00px;top:523.65px;width:380.30px;height:52.00px;background:#f9f9fa;border-radius:8px;"></div>
<div class="r" style="left:907.00px;top:578.52px;width:380.30px;height:52.00px;background:#f9f9fa;border-radius:8px;"></div>
<div class="r" style="left:907.00px;top:633.39px;width:380.30px;height:52.00px;background:#f9f9fa;border-radius:8px;"></div>
<div class="r" style="left:907.00px;top:688.26px;width:380.30px;height:52.00px;background:#f9f9fa;border-radius:8px;"></div>
<div class="r" style="left:907.00px;top:743.13px;width:380.30px;height:52.00px;background:#f9f9fa;border-radius:8px;"></div>
<div class="r" style="left:907.00px;top:798.00px;width:380.30px;height:52.00px;background:#f9f9fa;border-radius:8px;"></div>
<div class="r" style="left:907.00px;top:852.87px;width:380.30px;height:52.00px;background:#f9f9fa;border-radius:8px;"></div>
<div class="r" style="left:907.00px;top:907.74px;width:380.30px;height:52.00px;background:#f9f9fa;border-radius:8px;"></div>
<div class="r" style="left:907.00px;top:962.61px;width:380.30px;height:52.00px;background:#f9f9fa;border-radius:8px;"></div>
<div class="r" style="left:907.00px;top:1017.48px;width:380.30px;height:52.00px;background:#f9f9fa;border-radius:8px;"></div>
<div class="r" style="left:907.00px;top:1072.35px;width:380.30px;height:52.00px;background:#f9f9fa;border-radius:8px;"></div>
<div class="r" style="left:907.00px;top:1127.22px;width:380.30px;height:52.00px;background:#f9f9fa;border-radius:8px;"></div>
<div class="r" style="left:928.25px;top:289.00px;width:11.85px;height:42.47px;border-left:1.5px solid #d4d4d8;border-bottom:1.5px solid #d4d4d8;border-bottom-left-radius:6px;box-sizing:border-box;"></div>
<div class="r" style="left:944.75px;top:343.87px;width:11.85px;height:42.47px;border-left:1.5px solid #d4d4d8;border-bottom:1.5px solid #d4d4d8;border-bottom-left-radius:6px;box-sizing:border-box;"></div>
<div class="r" style="left:961.25px;top:398.74px;width:11.85px;height:42.47px;border-left:1.5px solid #d4d4d8;border-bottom:1.5px solid #d4d4d8;border-bottom-left-radius:6px;box-sizing:border-box;"></div>
<div class="r" style="left:977.75px;top:453.61px;width:11.85px;height:42.47px;border-left:1.5px solid #d4d4d8;border-bottom:1.5px solid #d4d4d8;border-bottom-left-radius:6px;box-sizing:border-box;"></div>
<div class="r" style="left:961.25px;top:398.74px;width:11.85px;height:152.21px;border-left:1.5px solid #d4d4d8;border-bottom:1.5px solid #d4d4d8;border-bottom-left-radius:6px;box-sizing:border-box;"></div>
<div class="r" style="left:961.25px;top:398.74px;width:11.85px;height:207.08px;border-left:1.5px solid #d4d4d8;border-bottom:1.5px solid #d4d4d8;border-bottom-left-radius:6px;box-sizing:border-box;"></div>
<div class="r" style="left:961.25px;top:398.74px;width:11.85px;height:261.95px;border-left:1.5px solid #d4d4d8;border-bottom:1.5px solid #d4d4d8;border-bottom-left-radius:6px;box-sizing:border-box;"></div>
<div class="r" style="left:977.75px;top:673.09px;width:11.85px;height:42.47px;border-left:1.5px solid #d4d4d8;border-bottom:1.5px solid #d4d4d8;border-bottom-left-radius:6px;box-sizing:border-box;"></div>
<div class="r" style="left:928.25px;top:289.00px;width:11.85px;height:481.43px;border-left:1.5px solid #d4d4d8;border-bottom:1.5px solid #d4d4d8;border-bottom-left-radius:6px;box-sizing:border-box;"></div>
<div class="r" style="left:944.75px;top:782.83px;width:11.85px;height:42.47px;border-left:1.5px solid #d4d4d8;border-bottom:1.5px solid #d4d4d8;border-bottom-left-radius:6px;box-sizing:border-box;"></div>
<div class="r" style="left:928.25px;top:289.00px;width:11.85px;height:591.17px;border-left:1.5px solid #d4d4d8;border-bottom:1.5px solid #d4d4d8;border-bottom-left-radius:6px;box-sizing:border-box;"></div>
<div class="r" style="left:944.75px;top:892.57px;width:11.85px;height:42.47px;border-left:1.5px solid #d4d4d8;border-bottom:1.5px solid #d4d4d8;border-bottom-left-radius:6px;box-sizing:border-box;"></div>
<div class="r" style="left:928.25px;top:289.00px;width:11.85px;height:700.91px;border-left:1.5px solid #d4d4d8;border-bottom:1.5px solid #d4d4d8;border-bottom-left-radius:6px;box-sizing:border-box;"></div>
<div class="r" style="left:944.75px;top:1002.31px;width:11.85px;height:42.47px;border-left:1.5px solid #d4d4d8;border-bottom:1.5px solid #d4d4d8;border-bottom-left-radius:6px;box-sizing:border-box;"></div>
<div class="r" style="left:928.25px;top:289.00px;width:11.85px;height:810.65px;border-left:1.5px solid #d4d4d8;border-bottom:1.5px solid #d4d4d8;border-bottom-left-radius:6px;box-sizing:border-box;"></div>
<div class="r" style="left:944.75px;top:1112.05px;width:11.85px;height:42.47px;border-left:1.5px solid #d4d4d8;border-bottom:1.5px solid #d4d4d8;border-bottom-left-radius:6px;box-sizing:border-box;"></div>
<div class="r" style="left:923.60px;top:262.00px;width:27.00px;height:27.00px;background:#4b4b52;border-radius:5px;"></div>
<svg class="r" style="left:923.60px;top:262.00px;" width="27.00" height="27.00" viewBox="0 0 27 27" fill="none"><circle cx="13.5" cy="13.5" r="7.3" stroke="#fff" stroke-width="1.7"/><circle cx="13.5" cy="13.5" r="1.7" fill="#fff"/></svg>
<div class="t" style="left:958.60px;top:255.51px;font-size:17.40px;color:#3f3f46;font-family:'Liberation Sans',sans-serif;font-weight:400;">eval</div>
<div class="t" style="left:958.60px;top:277.93px;font-size:16.20px;color:#6f36e8;font-family:'Liberation Sans',sans-serif;font-weight:400;letter-spacing:-1.2850000000000008px;">13.13s</div>
<svg class="r" style="left:1012.56px;top:282.00px;" width="12.00" height="12.00" viewBox="0 0 12 12" fill="none"><path d="M1 6h10M6.5 1.5L11 6l-4.5 4.5" stroke="#8a8a92" stroke-width="1.3" stroke-linecap="round" stroke-linejoin="round" fill="none"/></svg>
<div class="t" style="left:1036.26px;top:277.93px;font-size:16.20px;color:#18181b;font-family:'Liberation Sans',sans-serif;font-weight:400;letter-spacing:-0.7530000000000001px;">16.36s</div>
<svg class="r" style="left:1257.00px;top:273.30px;" width="12.00" height="7.50" viewBox="0 0 12 7.5" fill="none"><polyline points="1,1 6.0,6.5 11,1" stroke="#27272a" stroke-width="1.6" fill="none" stroke-linecap="round" stroke-linejoin="round"/></svg>
<div class="r" style="left:940.10px;top:316.87px;width:27.00px;height:27.00px;background:#3b62e6;border-radius:5px;"></div>
<svg class="r" style="left:940.10px;top:316.87px;" width="27.00" height="27.00" viewBox="0 0 27 27" fill="none"><path d="M13.5 6.5l6.2 3.4v7.2l-6.2 3.4-6.2-3.4V9.9z" stroke="#fff" stroke-width="1.5" stroke-linejoin="round"/><path d="M7.3 9.9l6.2 3.5 6.2-3.5M13.5 13.4v7.1" stroke="#fff" stroke-width="1.5" stroke-linejoin="round"/></svg>
<div class="t" style="left:975.10px;top:310.38px;font-size:17.40px;color:#3f3f46;font-family:'Liberation Sans',sans-serif;font-weight:400;">task</div>
<div class="t" style="left:975.10px;top:332.80px;font-size:16.20px;color:#6f36e8;font-family:'Liberation Sans',sans-serif;font-weight:400;letter-spacing:-0.3452499999999983px;">9.49s</div>
<svg class="r" style="left:1025.03px;top:336.87px;" width="12.00" height="12.00" viewBox="0 0 12 12" fill="none"><path d="M1 6h10M6.5 1.5L11 6l-4.5 4.5" stroke="#8a8a92" stroke-width="1.3" stroke-linecap="round" stroke-linejoin="round" fill="none"/></svg>
<div class="t" style="left:1048.73px;top:332.80px;font-size:16.20px;color:#18181b;font-family:'Liberation Sans',sans-serif;font-weight:400;letter-spacing:-0.7530000000000001px;">15.53s</div>
<svg class="r" style="left:1257.00px;top:328.17px;" width="12.00" height="7.50" viewBox="0 0 12 7.5" fill="none"><polyline points="1,1 6.0,6.5 11,1" stroke="#27272a" stroke-width="1.6" fill="none" stroke-linecap="round" stroke-linejoin="round"/></svg>
<div class="r" style="left:956.60px;top:371.74px;width:27.00px;height:27.00px;background:#1496b4;border-radius:5px;"></div>
<svg class="r" style="left:956.60px;top:371.74px;" width="27.00" height="27.00" viewBox="0 0 27 27" fill="none"><path d="M10.5 8.2c-1.6 1.4-2.3 3.2-2.3 5.3s.7 3.9 2.3 5.3M16.5 8.2c1.6 1.4 2.3 3.2 2.3 5.3s-.7 3.9-2.3 5.3" stroke="#fff" stroke-width="1.7" stroke-linecap="round" fill="none"/></svg>
<div class="t" style="left:991.60px;top:365.25px;font-size:17.40px;color:#3f3f46;font-family:'Liberation Sans',sans-serif;font-weight:400;">processUserMessage</div>
<div class="t" style="left:991.60px;top:387.67px;font-size:16.20px;color:#6f36e8;font-family:'Liberation Sans',sans-serif;font-weight:400;letter-spacing:-0.3452499999999983px;">9.48s</div>
<svg class="r" style="left:1041.53px;top:391.74px;" width="12.00" height="12.00" viewBox="0 0 12 12" fill="none"><path d="M1 6h10M6.5 1.5L11 6l-4.5 4.5" stroke="#8a8a92" stroke-width="1.3" stroke-linecap="round" stroke-linejoin="round" fill="none"/></svg>
<div class="t" style="left:1065.23px;top:387.67px;font-size:16.20px;color:#18181b;font-family:'Liberation Sans',sans-serif;font-weight:400;letter-spacing:-0.7530000000000001px;">15.53s</div>
<svg class="r" style="left:1257.00px;top:383.04px;" width="12.00" height="7.50" viewBox="0 0 12 7.5" fill="none"><polyline points="1,1 6.0,6.5 11,1" stroke="#27272a" stroke-width="1.6" fill="none" stroke-linecap="round" stroke-linejoin="round"/></svg>
<div class="r" style="left:973.10px;top:426.61px;width:27.00px;height:27.00px;background:#1496b4;border-radius:5px;"></div>
<svg class="r" style="left:973.10px;top:426.61px;" width="27.00" height="27.00" viewBox="0 0 27 27" fill="none"><path d="M10.5 8.2c-1.6 1.4-2.3 3.2-2.3 5.3s.7 3.9 2.3 5.3M16.5 8.2c1.6 1.4 2.3 3.2 2.3 5.3s-.7 3.9-2.3 5.3" stroke="#fff" stroke-width="1.7" stroke-linecap="round" fill="none"/></svg>
<div class="t" style="left:1008.10px;top:420.12px;font-size:17.40px;color:#3f3f46;font-family:'Liberation Sans',sans-serif;font-weight:400;">llmCall</div>
<div class="t" style="left:1008.10px;top:442.54px;font-size:16.20px;color:#6f36e8;font-family:'Liberation Sans',sans-serif;font-weight:400;letter-spacing:-0.3452499999999983px;">2.02s</div>
<svg class="r" style="left:1058.03px;top:446.61px;" width="12.00" height="12.00" viewBox="0 0 12 12" fill="none"><path d="M1 6h10M6.5 1.5L11 6l-4.5 4.5" stroke="#8a8a92" stroke-width="1.3" stroke-linecap="round" stroke-linejoin="round" fill="none"/></svg>
<div class="t" style="left:1081.73px;top:442.54px;font-size:16.20px;color:#18181b;font-family:'Liberation Sans',sans-serif;font-weight:400;letter-spacing:-0.3452499999999983px;">2.09s</div>
<svg class="r" style="left:1257.00px;top:437.91px;" width="12.00" height="7.50" viewBox="0 0 12 7.5" fill="none"><polyline points="1,1 6.0,6.5 11,1" stroke="#27272a" stroke-width="1.6" fill="none" stroke-linecap="round" stroke-linejoin="round"/></svg>
<div class="r" style="left:989.60px;top:481.48px;width:27.00px;height:27.00px;background:#7c3aed;border-radius:5px;"></div>
<svg class="r" style="left:989.60px;top:481.48px;" width="27.00" height="27.00" viewBox="0 0 27 27" fill="none"><path d="M9 19.2l.9-3.1a6.2 6.2 0 1 1 2.4 2.3z" stroke="#fff" stroke-width="1.6" stroke-linejoin="round"/></svg>
<svg class="r" style="left:1026.10px;top:474.28px;" width="18.50" height="18.50" viewBox="0 0 24 24" fill="none"><path fill="#52525b" d="M22.28 9.82a5.98 5.98 0 0 0-.52-4.91 6.05 6.05 0 0 0-6.51-2.9A6.07 6.07 0 0 0 4.98 4.18a5.98 5.98 0 0 0-4 2.9 6.05 6.05 0 0 0 .74 7.1 5.98 5.98 0 0 0 .51 4.91 6.05 6.05 0 0 0 6.51 2.9A5.98 5.98 0 0 0 13.26 24a6.06 6.06 0 0 0 5.77-4.21 5.99 5.99 0 0 0 4-2.9 6.06 6.06 0 0 0-.75-7.07zm-9.02 12.61a4.48 4.48 0 0 1-2.88-1.04l.14-.08 4.78-2.76a.8.8 0 0 0 .39-.68v-6.74l2.02 1.17a.07.07 0 0 1 .04.05v5.58a4.5 4.5 0 0 1-4.49 4.5zm-9.66-4.13a4.47 4.47 0 0 1-.53-3.01l.14.09 4.78 2.76a.77.77 0 0 0 .78 0l5.84-3.37v2.33a.08.08 0 0 1-.03.06L9.74 19.95a4.5 4.5 0 0 1-6.14-1.65zM2.34 7.9a4.49 4.49 0 0 1 2.37-1.97V11.6a.77.77 0 0 0 .39.68l5.81 3.35-2.02 1.17a.08.08 0 0 1-.07 0l-4.83-2.79A4.5 4.5 0 0 1 2.34 7.87zm16.6 3.86L13.1 8.36 15.12 7.2a.08.08 0 0 1 .07 0l4.83 2.79a4.49 4.49 0 0 1-.68 8.1v-5.68a.79.79 0 0 0-.4-.66zm2.01-3.02l-.14-.09-4.77-2.78a.78.78 0 0 0-.79 0L9.41 9.23V6.9a.07.07 0 0 1 .03-.06l4.83-2.79a4.5 4.5 0 0 1 6.68 4.66zM8.31 12.86L6.29 11.7a.08.08 0 0 1-.04-.06V6.07a4.5 4.5 0 0 1 7.38-3.45l-.14.08-4.78 2.76a.8.8 0 0 0-.39.68zm1.1-2.37l2.6-1.5 2.61 1.5v3l-2.6 1.5-2.6-1.5z"/></svg>
<div class="t" style="left:1052.10px;top:474.99px;font-size:17.40px;color:#3f3f46;font-family:'Liberation Sans',sans-serif;font-weight:400;">GPT-4o mini</div>
<div class="t" style="left:1024.60px;top:497.41px;font-size:16.20px;color:#6f36e8;font-family:'Liberation Sans',sans-serif;font-weight:400;letter-spacing:-0.3452499999999983px;">2.02s</div>
<svg class="r" style="left:1074.53px;top:501.48px;" width="12.00" height="12.00" viewBox="0 0 12 12" fill="none"><path d="M1 6h10M6.5 1.5L11 6l-4.5 4.5" stroke="#8a8a92" stroke-width="1.3" stroke-linecap="round" stroke-linejoin="round" fill="none"/></svg>
<div class="t" style="left:1098.23px;top:497.41px;font-size:16.20px;color:#18181b;font-family:'Liberation Sans',sans-serif;font-weight:400;letter-spacing:-0.3452499999999983px;">2.09s</div>
<div class="r" style="left:973.10px;top:536.35px;width:27.00px;height:27.00px;background:#dc7a0d;border-radius:5px;"></div>
<svg class="r" style="left:973.10px;top:536.35px;" width="27.00" height="27.00" viewBox="0 0 27 27" fill="none"><path d="M13.5 6.8l5.8 3.35v6.7l-5.8 3.35-5.8-3.35v-6.7z" stroke="#fff" stroke-width="1.5" stroke-linejoin="round"/><circle cx="13.5" cy="13.5" r="2.5" stroke="#fff" stroke-width="1.5"/></svg>
<div class="t" style="left:1008.10px;top:529.86px;font-size:17.40px;color:#3f3f46;font-family:'Liberation Sans',sans-serif;font-weight:400;">search_knowledge_base</div>
<div class="t" style="left:1008.10px;top:552.28px;font-size:16.20px;color:#6f36e8;font-family:'Liberation Sans',sans-serif;font-weight:400;letter-spacing:-0.3452499999999983px;">0.74s</div>
<svg class="r" style="left:1058.03px;top:556.35px;" width="12.00" height="12.00" viewBox="0 0 12 12" fill="none"><path d="M1 6h10M6.5 1.5L11 6l-4.5 4.5" stroke="#8a8a92" stroke-width="1.3" stroke-linecap="round" stroke-linejoin="round" fill="none"/></svg>
<div class="t" style="left:1081.73px;top:552.28px;font-size:16.20px;color:#18181b;font-family:'Liberation Sans',sans-serif;font-weight:400;letter-spacing:-0.5793333333333331px;">0.8s</div>
<div class="r" style="left:973.10px;top:591.22px;width:27.00px;height:27.00px;background:#dc7a0d;border-radius:5px;"></div>
<svg class="r" style="left:973.10px;top:591.22px;" width="27.00" height="27.00" viewBox="0 0 27 27" fill="none"><path d="M13.5 6.8l5.8 3.35v6.7l-5.8 3.35-5.8-3.35v-6.7z" stroke="#fff" stroke-width="1.5" stroke-linejoin="round"/><circle cx="13.5" cy="13.5" r="2.5" stroke="#fff" stroke-width="1.5"/></svg>
<div class="t" style="left:1008.10px;top:584.73px;font-size:17.40px;color:#3f3f46;font-family:'Liberation Sans',sans-serif;font-weight:400;">calculate</div>
<div class="t" style="left:1008.10px;top:607.15px;font-size:16.20px;color:#6f36e8;font-family:'Liberation Sans',sans-serif;font-weight:400;letter-spacing:-0.3452499999999983px;">0.53s</div>
<svg class="r" style="left:1058.03px;top:611.22px;" width="12.00" height="12.00" viewBox="0 0 12 12" fill="none"><path d="M1 6h10M6.5 1.5L11 6l-4.5 4.5" stroke="#8a8a92" stroke-width="1.3" stroke-linecap="round" stroke-linejoin="round" fill="none"/></svg>
<div class="t" style="left:1081.73px;top:607.15px;font-size:16.20px;color:#18181b;font-family:'Liberation Sans',sans-serif;font-weight:400;letter-spacing:-1.0102499999999992px;">1.37s</div>
<div class="r" style="left:973.10px;top:646.09px;width:27.00px;height:27.00px;background:#1496b4;border-radius:5px;"></div>
<svg class="r" style="left:973.10px;top:646.09px;" width="27.00" height="27.00" viewBox="0 0 27 27" fill="none"><path d="M10.5 8.2c-1.6 1.4-2.3 3.2-2.3 5.3s.7 3.9 2.3 5.3M16.5 8.2c1.6 1.4 2.3 3.2 2.3 5.3s-.7 3.9-2.3 5.3" stroke="#fff" stroke-width="1.7" stroke-linecap="round" fill="none"/></svg>
<div class="t" style="left:1008.10px;top:639.60px;font-size:17.40px;color:#3f3f46;font-family:'Liberation Sans',sans-serif;font-weight:400;">llmFollowup</div>
<div class="t" style="left:1008.10px;top:662.02px;font-size:16.20px;color:#6f36e8;font-family:'Liberation Sans',sans-serif;font-weight:400;letter-spacing:-1.0102499999999992px;">6.18s</div>
<svg class="r" style="left:1055.37px;top:666.09px;" width="12.00" height="12.00" viewBox="0 0 12 12" fill="none"><path d="M1 6h10M6.5 1.5L11 6l-4.5 4.5" stroke="#8a8a92" stroke-width="1.3" stroke-linecap="round" stroke-linejoin="round" fill="none"/></svg>
<div class="t" style="left:1079.07px;top:662.02px;font-size:16.20px;color:#18181b;font-family:'Liberation Sans',sans-serif;font-weight:400;letter-spacing:-1.0420000000000016px;">11.27s</div>
<svg class="r" style="left:1257.00px;top:657.39px;" width="12.00" height="7.50" viewBox="0 0 12 7.5" fill="none"><polyline points="1,1 6.0,6.5 11,1" stroke="#27272a" stroke-width="1.6" fill="none" stroke-linecap="round" stroke-linejoin="round"/></svg>
<div class="r" style="left:989.60px;top:700.96px;width:27.00px;height:27.00px;background:#7c3aed;border-radius:5px;"></div>
<svg class="r" style="left:989.60px;top:700.96px;" width="27.00" height="27.00" viewBox="0 0 27 27" fill="none"><path d="M9 19.2l.9-3.1a6.2 6.2 0 1 1 2.4 2.3z" stroke="#fff" stroke-width="1.6" stroke-linejoin="round"/></svg>
<svg class="r" style="left:1026.10px;top:693.76px;" width="18.50" height="18.50" viewBox="0 0 24 24" fill="none"><path fill="#52525b" d="M22.28 9.82a5.98 5.98 0 0 0-.52-4.91 6.05 6.05 0 0 0-6.51-2.9A6.07 6.07 0 0 0 4.98 4.18a5.98 5.98 0 0 0-4 2.9 6.05 6.05 0 0 0 .74 7.1 5.98 5.98 0 0 0 .51 4.91 6.05 6.05 0 0 0 6.51 2.9A5.98 5.98 0 0 0 13.26 24a6.06 6.06 0 0 0 5.77-4.21 5.99 5.99 0 0 0 4-2.9 6.06 6.06 0 0 0-.75-7.07zm-9.02 12.61a4.48 4.48 0 0 1-2.88-1.04l.14-.08 4.78-2.76a.8.8 0 0 0 .39-.68v-6.74l2.02 1.17a.07.07 0 0 1 .04.05v5.58a4.5 4.5 0 0 1-4.49 4.5zm-9.66-4.13a4.47 4.47 0 0 1-.53-3.01l.14.09 4.78 2.76a.77.77 0 0 0 .78 0l5.84-3.37v2.33a.08.08 0 0 1-.03.06L9.74 19.95a4.5 4.5 0 0 1-6.14-1.65zM2.34 7.9a4.49 4.49 0 0 1 2.37-1.97V11.6a.77.77 0 0 0 .39.68l5.81 3.35-2.02 1.17a.08.08 0 0 1-.07 0l-4.83-2.79A4.5 4.5 0 0 1 2.34 7.87zm16.6 3.86L13.1 8.36 15.12 7.2a.08.08 0 0 1 .07 0l4.83 2.79a4.49 4.49 0 0 1-.68 8.1v-5.68a.79.79 0 0 0-.4-.66zm2.01-3.02l-.14-.09-4.77-2.78a.78.78 0 0 0-.79 0L9.41 9.23V6.9a.07.07 0 0 1 .03-.06l4.83-2.79a4.5 4.5 0 0 1 6.68 4.66zM8.31 12.86L6.29 11.7a.08.08 0 0 1-.04-.06V6.07a4.5 4.5 0 0 1 7.38-3.45l-.14.08-4.78 2.76a.8.8 0 0 0-.39.68zm1.1-2.37l2.6-1.5 2.61 1.5v3l-2.6 1.5-2.6-1.5z"/></svg>
<div class="t" style="left:1052.10px;top:694.47px;font-size:17.40px;color:#3f3f46;font-family:'Liberation Sans',sans-serif;font-weight:400;">GPT-4o mini</div>
<div class="t" style="left:1024.60px;top:716.89px;font-size:16.20px;color:#6f36e8;font-family:'Liberation Sans',sans-serif;font-weight:400;letter-spacing:-1.0102499999999992px;">6.18s</div>
<svg class="r" style="left:1071.87px;top:720.96px;" width="12.00" height="12.00" viewBox="0 0 12 12" fill="none"><path d="M1 6h10M6.5 1.5L11 6l-4.5 4.5" stroke="#8a8a92" stroke-width="1.3" stroke-linecap="round" stroke-linejoin="round" fill="none"/></svg>
<div class="t" style="left:1095.57px;top:716.89px;font-size:16.20px;color:#18181b;font-family:'Liberation Sans',sans-serif;font-weight:400;letter-spacing:-1.0420000000000016px;">11.27s</div>
<div class="r" style="left:940.10px;top:755.83px;width:27.00px;height:27.00px;background:#0b966a;border-radius:5px;"></div>
<svg class="r" style="left:940.10px;top:755.83px;" width="27.00" height="27.00" viewBox="0 0 27 27" fill="none"><path d="M18.5 8.5l-10 10" stroke="#fff" stroke-width="1.7" stroke-linecap="round"/><circle cx="9.6" cy="9.6" r="1.6" stroke="#fff" stroke-width="1.5"/><circle cx="17.4" cy="17.4" r="1.6" stroke="#fff" stroke-width="1.5"/></svg>
<div class="t" style="left:975.10px;top:749.34px;font-size:17.40px;color:#3f3f46;font-family:'Liberation Sans',sans-serif;font-weight:400;letter-spacing:0.27px;">initFunction-Customer support-C...</div>
<div class="t" style="left:975.10px;top:771.76px;font-size:16.20px;color:#6f36e8;font-family:'Liberation Sans',sans-serif;font-weight:400;letter-spacing:-0.3452499999999983px;">0.52s</div>
<svg class="r" style="left:1025.03px;top:775.83px;" width="12.00" height="12.00" viewBox="0 0 12 12" fill="none"><path d="M1 6h10M6.5 1.5L11 6l-4.5 4.5" stroke="#8a8a92" stroke-width="1.3" stroke-linecap="round" stroke-linejoin="round" fill="none"/></svg>
<div class="t" style="left:1048.73px;top:771.76px;font-size:16.20px;color:#18181b;font-family:'Liberation Sans',sans-serif;font-weight:400;letter-spacing:-0.3452499999999983px;">0.57s</div>
<svg class="r" style="left:1257.00px;top:767.13px;" width="12.00" height="7.50" viewBox="0 0 12 7.5" fill="none"><polyline points="1,1 6.0,6.5 11,1" stroke="#27272a" stroke-width="1.6" fill="none" stroke-linecap="round" stroke-linejoin="round"/></svg>
<div class="r" style="left:956.60px;top:810.70px;width:27.00px;height:27.00px;background:#0b966a;border-radius:5px;"></div>
<svg class="r" style="left:956.60px;top:810.70px;" width="27.00" height="27.00" viewBox="0 0 27 27" fill="none"><path d="M18.5 8.5l-10 10" stroke="#fff" stroke-width="1.7" stroke-linecap="round"/><circle cx="9.6" cy="9.6" r="1.6" stroke="#fff" stroke-width="1.5"/><circle cx="17.4" cy="17.4" r="1.6" stroke="#fff" stroke-width="1.5"/></svg>
<div class="t" style="left:991.60px;top:804.21px;font-size:17.40px;color:#3f3f46;font-family:'Liberation Sans',sans-serif;font-weight:400;">Closed QA</div>
<div class="t" style="left:991.60px;top:826.63px;font-size:16.20px;color:#6f36e8;font-family:'Liberation Sans',sans-serif;font-weight:400;letter-spacing:-0.3452499999999983px;">0.06s</div>
<svg class="r" style="left:1041.53px;top:830.70px;" width="12.00" height="12.00" viewBox="0 0 12 12" fill="none"><path d="M1 6h10M6.5 1.5L11 6l-4.5 4.5" stroke="#8a8a92" stroke-width="1.3" stroke-linecap="round" stroke-linejoin="round" fill="none"/></svg>
<div class="t" style="left:1065.23px;top:826.63px;font-size:16.20px;color:#18181b;font-family:'Liberation Sans',sans-serif;font-weight:400;letter-spacing:-0.3452499999999983px;">0.05s</div>
<div class="r" style="left:940.10px;top:865.57px;width:27.00px;height:27.00px;background:#0b966a;border-radius:5px;"></div>
<svg class="r" style="left:940.10px;top:865.57px;" width="27.00" height="27.00" viewBox="0 0 27 27" fill="none"><path d="M18.5 8.5l-10 10" stroke="#fff" stroke-width="1.7" stroke-linecap="round"/><circle cx="9.6" cy="9.6" r="1.6" stroke="#fff" stroke-width="1.5"/><circle cx="17.4" cy="17.4" r="1.6" stroke="#fff" stroke-width="1.5"/></svg>
<div class="t" style="left:975.10px;top:859.08px;font-size:17.40px;color:#3f3f46;font-family:'Liberation Sans',sans-serif;font-weight:400;letter-spacing:0.27px;">initFunction-Customer support-C...</div>
<div class="t" style="left:975.10px;top:881.50px;font-size:16.20px;color:#6f36e8;font-family:'Liberation Sans',sans-serif;font-weight:400;letter-spacing:-0.3452499999999983px;">0.42s</div>
<svg class="r" style="left:1025.03px;top:885.57px;" width="12.00" height="12.00" viewBox="0 0 12 12" fill="none"><path d="M1 6h10M6.5 1.5L11 6l-4.5 4.5" stroke="#8a8a92" stroke-width="1.3" stroke-linecap="round" stroke-linejoin="round" fill="none"/></svg>
<div class="t" style="left:1048.73px;top:881.50px;font-size:16.20px;color:#18181b;font-family:'Liberation Sans',sans-serif;font-weight:400;letter-spacing:-0.3452499999999983px;">0.83s</div>
<svg class="r" style="left:1257.00px;top:876.87px;" width="12.00" height="7.50" viewBox="0 0 12 7.5" fill="none"><polyline points="1,1 6.0,6.5 11,1" stroke="#27272a" stroke-width="1.6" fill="none" stroke-linecap="round" stroke-linejoin="round"/></svg>
<div class="r" style="left:956.60px;top:920.44px;width:27.00px;height:27.00px;background:#0b966a;border-radius:5px;"></div>
<svg class="r" style="left:956.60px;top:920.44px;" width="27.00" height="27.00" viewBox="0 0 27 27" fill="none"><path d="M18.5 8.5l-10 10" stroke="#fff" stroke-width="1.7" stroke-linecap="round"/><circle cx="9.6" cy="9.6" r="1.6" stroke="#fff" stroke-width="1.5"/><circle cx="17.4" cy="17.4" r="1.6" stroke="#fff" stroke-width="1.5"/></svg>
<div class="t" style="left:991.60px;top:913.95px;font-size:17.40px;color:#3f3f46;font-family:'Liberation Sans',sans-serif;font-weight:400;">Summary</div>
<div class="t" style="left:991.60px;top:936.37px;font-size:16.20px;color:#6f36e8;font-family:'Liberation Sans',sans-serif;font-weight:400;letter-spacing:-0.3452499999999983px;">0.05s</div>
<svg class="r" style="left:1041.53px;top:940.44px;" width="12.00" height="12.00" viewBox="0 0 12 12" fill="none"><path d="M1 6h10M6.5 1.5L11 6l-4.5 4.5" stroke="#8a8a92" stroke-width="1.3" stroke-linecap="round" stroke-linejoin="round" fill="none"/></svg>
<div class="t" style="left:1065.23px;top:936.37px;font-size:16.20px;color:#18181b;font-family:'Liberation Sans',sans-serif;font-weight:400;letter-spacing:-0.3452499999999983px;">0.04s</div>
<div class="r" style="left:940.10px;top:975.31px;width:27.00px;height:27.00px;background:#0b966a;border-radius:5px;"></div>
<svg class="r" style="left:940.10px;top:975.31px;" width="27.00" height="27.00" viewBox="0 0 27 27" fill="none"><path d="M18.5 8.5l-10 10" stroke="#fff" stroke-width="1.7" stroke-linecap="round"/><circle cx="9.6" cy="9.6" r="1.6" stroke="#fff" stroke-width="1.5"/><circle cx="17.4" cy="17.4" r="1.6" stroke="#fff" stroke-width="1.5"/></svg>
<div class="t" style="left:975.10px;top:968.82px;font-size:17.40px;color:#3f3f46;font-family:'Liberation Sans',sans-serif;font-weight:400;letter-spacing:0.27px;">initFunction-Customer support-C...</div>
<div class="t" style="left:975.10px;top:991.24px;font-size:16.20px;color:#6f36e8;font-family:'Liberation Sans',sans-serif;font-weight:400;letter-spacing:-0.3452499999999983px;">0.55s</div>
<svg class="r" style="left:1025.03px;top:995.31px;" width="12.00" height="12.00" viewBox="0 0 12 12" fill="none"><path d="M1 6h10M6.5 1.5L11 6l-4.5 4.5" stroke="#8a8a92" stroke-width="1.3" stroke-linecap="round" stroke-linejoin="round" fill="none"/></svg>
<div class="t" style="left:1048.73px;top:991.24px;font-size:16.20px;color:#18181b;font-family:'Liberation Sans',sans-serif;font-weight:400;letter-spacing:-0.3452499999999983px;">0.38s</div>
<svg class="r" style="left:1257.00px;top:986.61px;" width="12.00" height="7.50" viewBox="0 0 12 7.5" fill="none"><polyline points="1,1 6.0,6.5 11,1" stroke="#27272a" stroke-width="1.6" fill="none" stroke-linecap="round" stroke-linejoin="round"/></svg>
<div class="r" style="left:956.60px;top:1030.18px;width:27.00px;height:27.00px;background:#0b966a;border-radius:5px;"></div>
<svg class="r" style="left:956.60px;top:1030.18px;" width="27.00" height="27.00" viewBox="0 0 27 27" fill="none"><path d="M18.5 8.5l-10 10" stroke="#fff" stroke-width="1.7" stroke-linecap="round"/><circle cx="9.6" cy="9.6" r="1.6" stroke="#fff" stroke-width="1.5"/><circle cx="17.4" cy="17.4" r="1.6" stroke="#fff" stroke-width="1.5"/></svg>
<div class="t" style="left:991.60px;top:1023.69px;font-size:17.40px;color:#3f3f46;font-family:'Liberation Sans',sans-serif;font-weight:400;">Custom Scorer</div>
<div class="t" style="left:991.60px;top:1046.11px;font-size:16.20px;color:#6f36e8;font-family:'Liberation Sans',sans-serif;font-weight:400;letter-spacing:-0.3452499999999983px;">0.06s</div>
<svg class="r" style="left:1041.53px;top:1050.18px;" width="12.00" height="12.00" viewBox="0 0 12 12" fill="none"><path d="M1 6h10M6.5 1.5L11 6l-4.5 4.5" stroke="#8a8a92" stroke-width="1.3" stroke-linecap="round" stroke-linejoin="round" fill="none"/></svg>
<div class="t" style="left:1065.23px;top:1046.11px;font-size:16.20px;color:#18181b;font-family:'Liberation Sans',sans-serif;font-weight:400;letter-spacing:-0.3452499999999983px;">0.04s</div>
<div class="r" style="left:940.10px;top:1085.05px;width:27.00px;height:27.00px;background:#0b966a;border-radius:5px;"></div>
<svg class="r" style="left:940.10px;top:1085.05px;" width="27.00" height="27.00" viewBox="0 0 27 27" fill="none"><path d="M18.5 8.5l-10 10" stroke="#fff" stroke-width="1.7" stroke-linecap="round"/><circle cx="9.6" cy="9.6" r="1.6" stroke="#fff" stroke-width="1.5"/><circle cx="17.4" cy="17.4" r="1.6" stroke="#fff" stroke-width="1.5"/></svg>
<div class="t" style="left:975.10px;top:1078.56px;font-size:17.40px;color:#3f3f46;font-family:'Liberation Sans',sans-serif;font-weight:400;letter-spacing:0.27px;">initFunction-Customer support-C...</div>
<div class="t" style="left:975.10px;top:1100.98px;font-size:16.20px;color:#6f36e8;font-family:'Liberation Sans',sans-serif;font-weight:400;letter-spacing:-0.3452499999999983px;">3.64s</div>
<svg class="r" style="left:1025.03px;top:1105.05px;" width="12.00" height="12.00" viewBox="0 0 12 12" fill="none"><path d="M1 6h10M6.5 1.5L11 6l-4.5 4.5" stroke="#8a8a92" stroke-width="1.3" stroke-linecap="round" stroke-linejoin="round" fill="none"/></svg>
<div class="t" style="left:1048.73px;top:1100.98px;font-size:16.20px;color:#18181b;font-family:'Liberation Sans',sans-serif;font-weight:400;letter-spacing:-0.3452499999999983px;">0.63s</div>
<svg class="r" style="left:1257.00px;top:1096.35px;" width="12.00" height="7.50" viewBox="0 0 12 7.5" fill="none"><polyline points="1,1 6.0,6.5 11,1" stroke="#27272a" stroke-width="1.6" fill="none" stroke-linecap="round" stroke-linejoin="round"/></svg>
<div class="r" style="left:956.60px;top:1139.92px;width:27.00px;height:27.00px;background:#0b966a;border-radius:5px;"></div>
<svg class="r" style="left:956.60px;top:1139.92px;" width="27.00" height="27.00" viewBox="0 0 27 27" fill="none"><path d="M18.5 8.5l-10 10" stroke="#fff" stroke-width="1.7" stroke-linecap="round"/><circle cx="9.6" cy="9.6" r="1.6" stroke="#fff" stroke-width="1.5"/><circle cx="17.4" cy="17.4" r="1.6" stroke="#fff" stroke-width="1.5"/></svg>
<div class="t" style="left:991.60px;top:1133.43px;font-size:17.40px;color:#3f3f46;font-family:'Liberation Sans',sans-serif;font-weight:400;">Intent Classification</div>
<div class="t" style="left:991.60px;top:1155.85px;font-size:16.20px;color:#6f36e8;font-family:'Liberation Sans',sans-serif;font-weight:400;letter-spacing:-1.0102499999999992px;">0.12s</div>
<svg class="r" style="left:1038.87px;top:1159.92px;" width="12.00" height="12.00" viewBox="0 0 12 12" fill="none"><path d="M1 6h10M6.5 1.5L11 6l-4.5 4.5" stroke="#8a8a92" stroke-width="1.3" stroke-linecap="round" stroke-linejoin="round" fill="none"/></svg>
<div class="t" style="left:1062.57px;top:1155.85px;font-size:16.20px;color:#18181b;font-family:'Liberation Sans',sans-serif;font-weight:400;letter-spacing:-0.3452499999999983px;">0.08s</div>
<div class="r" style="left:1293.3px;top:176.8px;width:754.7px;height:984.2px;overflow:hidden;">
<div class="r" style="left:67.50px;top:0.00px;width:657.00px;height:394.90px;background:#fdf3f8;border-radius:0px;"></div>
<div class="r" style="left:67.50px;top:0.00px;width:3.00px;height:394.90px;background:#f0589c;border-radius:0px;"></div>
<div class="r" style="left:79.70px;top:-18.03px;width:648.96px;height:19.30px;background:#fce0ee;border-radius:0px;"></div>
<div class="t" style="left:79.70px;top:-14.57px;font-size:16.90px;color:#3a3a41;font-family:'Liberation Mono',monospace;font-weight:400;">communication tools and regular virtual check-ins to help teams </div>
<div class="r" style="left:79.70px;top:5.00px;width:375.18px;height:19.30px;background:#fce0ee;border-radius:0px;"></div>
<div class="t" style="left:79.70px;top:8.46px;font-size:16.90px;color:#3a3a41;font-family:'Liberation Mono',monospace;font-weight:400;">maintain a cohesive work environment.</div>
<div class="r" style="left:79.70px;top:51.05px;width:598.26px;height:19.30px;background:#fce0ee;border-radius:0px;"></div>
<div class="t" style="left:79.70px;top:54.51px;font-size:16.90px;color:#3a3a41;font-family:'Liberation Mono',monospace;font-weight:400;">5. **Focus on Results:** Many companies are shifting their </div>
<div class="r" style="left:79.70px;top:74.07px;width:628.68px;height:19.30px;background:#fce0ee;border-radius:0px;"></div>
<div class="t" style="left:79.70px;top:77.53px;font-size:16.90px;color:#3a3a41;font-family:'Liberation Mono',monospace;font-weight:400;">focus from hours worked to results achieved, which can foster </div>
<div class="r" style="left:79.70px;top:97.10px;width:446.16px;height:19.30px;background:#fce0ee;border-radius:0px;"></div>
<div class="t" style="left:79.70px;top:100.56px;font-size:16.90px;color:#3a3a41;font-family:'Liberation Mono',monospace;font-weight:400;">a culture of accountability and performance.</div>
<div class="r" style="left:79.70px;top:143.15px;width:415.74px;height:19.30px;background:#fce0ee;border-radius:0px;"></div>
<div class="t" style="left:79.70px;top:146.61px;font-size:16.90px;color:#3a3a41;font-family:'Liberation Mono',monospace;font-weight:400;">### Office Space Cost Savings Calculation</div>
<div class="r" style="left:79.70px;top:189.20px;width:588.12px;height:19.30px;background:#fce0ee;border-radius:0px;"></div>
<div class="t" style="left:79.70px;top:192.66px;font-size:16.90px;color:#3a3a41;font-family:'Liberation Mono',monospace;font-weight:400;">To calculate potential office space cost savings, we need </div>
<div class="r" style="left:79.70px;top:212.22px;width:446.16px;height:19.30px;background:#fce0ee;border-radius:0px;"></div>
<div class="t" style="left:79.70px;top:215.68px;font-size:16.90px;color:#3a3a41;font-family:'Liberation Mono',monospace;font-weight:400;">specific values for the following variables:</div>
<div class="r" style="left:79.70px;top:235.25px;width:436.02px;height:19.30px;background:#fce0ee;border-radius:0px;"></div>
<div class="t" style="left:79.70px;top:238.71px;font-size:16.90px;color:#3a3a41;font-family:'Liberation Mono',monospace;font-weight:400;">- Average office space cost per square foot</div>
<div class="r" style="left:79.70px;top:258.27px;width:212.94px;height:19.30px;background:#fce0ee;border-radius:0px;"></div>
<div class="t" style="left:79.70px;top:261.73px;font-size:16.90px;color:#3a3a41;font-family:'Liberation Mono',monospace;font-weight:400;">- Number of employees</div>
<div class="r" style="left:79.70px;top:281.30px;width:375.18px;height:19.30px;background:#fce0ee;border-radius:0px;"></div>
<div class="t" style="left:79.70px;top:284.76px;font-size:16.90px;color:#3a3a41;font-family:'Liberation Mono',monospace;font-weight:400;">- Average square footage per employee</div>
<div class="r" style="left:79.70px;top:304.32px;width:456.30px;height:19.30px;background:#fce0ee;border-radius:0px;"></div>
<div class="t" style="left:79.70px;top:307.78px;font-size:16.90px;color:#3a3a41;font-family:'Liberation Mono',monospace;font-weight:400;">- Percentage reduction in office space needed</div>
<div class="r" style="left:79.70px;top:350.38px;width:537.42px;height:19.30px;background:#fce0ee;border-radius:0px;"></div>
<div class="t" style="left:79.70px;top:353.83px;font-size:16.90px;color:#3a3a41;font-family:'Liberation Mono',monospace;font-weight:400;">If you provide these values, I can help you with the </div>
<div class="r" style="left:79.70px;top:373.40px;width:121.68px;height:19.30px;background:#fce0ee;border-radius:0px;"></div>
<div class="t" style="left:79.70px;top:376.86px;font-size:16.90px;color:#3a3a41;font-family:'Liberation Mono',monospace;font-weight:400;">calculation.</div>
<div class="r" style="left:66.70px;top:394.90px;width:657.80px;height:589.30px;background:#f3fcf5;border-radius:0px;"></div>
<div class="r" style="left:66.70px;top:394.90px;width:2.80px;height:589.30px;background:#22c02a;border-radius:0px;"></div>
<div class="r" style="left:349.78px;top:396.43px;width:30.42px;height:19.30px;background:#d5f7de;border-radius:0px;"></div>
<div class="r" style="left:522.16px;top:396.43px;width:81.12px;height:19.30px;background:#d5f7de;border-radius:0px;"></div>
<div class="t" style="left:76.00px;top:399.88px;font-size:16.90px;color:#3a3a41;font-family:'Liberation Mono',monospace;font-weight:400;">1. **Increased Productivity**: Many studies indicate that </div>
<div class="t" style="left:39.26px;top:399.88px;font-size:16.90px;color:#a1a1aa;font-family:'Liberation Mono',monospace;font-weight:400;">3</div>
<div class="t" style="left:76.00px;top:422.91px;font-size:16.90px;color:#3a3a41;font-family:'Liberation Mono',monospace;font-weight:400;">remote work can lead to increased productivity. Employees </div>
<div class="r" style="left:441.04px;top:442.47px;width:233.22px;height:19.30px;background:#d5f7de;border-radius:0px;"></div>
<div class="t" style="left:76.00px;top:445.93px;font-size:16.90px;color:#3a3a41;font-family:'Liberation Mono',monospace;font-weight:400;">often report fewer distractions and the ability to work in </div>
<div class="r" style="left:76.00px;top:465.50px;width:588.12px;height:19.30px;background:#d5f7de;border-radius:0px;"></div>
<div class="t" style="left:76.00px;top:468.96px;font-size:16.90px;color:#3a3a41;font-family:'Liberation Mono',monospace;font-weight:400;">their preferred environments, which can enhance focus and </div>
<div class="r" style="left:76.00px;top:488.53px;width:111.54px;height:19.30px;background:#d5f7de;border-radius:0px;"></div>
<div class="t" style="left:76.00px;top:491.98px;font-size:16.90px;color:#3a3a41;font-family:'Liberation Mono',monospace;font-weight:400;">efficiency.</div>
<div class="t" style="left:39.26px;top:515.01px;font-size:16.90px;color:#a1a1aa;font-family:'Liberation Mono',monospace;font-weight:400;">4</div>
<div class="r" style="left:76.00px;top:534.58px;width:608.40px;height:19.30px;background:#d5f7de;border-radius:0px;"></div>
<div class="t" style="left:76.00px;top:538.03px;font-size:16.90px;color:#3a3a41;font-family:'Liberation Mono',monospace;font-weight:400;">2. **Flexible Work Hours**: Remote work allows for flexible </div>
<div class="t" style="left:39.26px;top:538.03px;font-size:16.90px;color:#a1a1aa;font-family:'Liberation Mono',monospace;font-weight:400;">5</div>
<div class="r" style="left:76.00px;top:557.60px;width:547.56px;height:19.30px;background:#d5f7de;border-radius:0px;"></div>
<div class="t" style="left:76.00px;top:561.06px;font-size:16.90px;color:#3a3a41;font-family:'Liberation Mono',monospace;font-weight:400;">scheduling, which can improve work-life balance. This </div>
<div class="r" style="left:76.00px;top:580.62px;width:608.40px;height:19.30px;background:#d5f7de;border-radius:0px;"></div>
<div class="t" style="left:76.00px;top:584.08px;font-size:16.90px;color:#3a3a41;font-family:'Liberation Mono',monospace;font-weight:400;">flexibility often leads to higher employee satisfaction and </div>
<div class="r" style="left:76.00px;top:603.65px;width:395.46px;height:19.30px;background:#d5f7de;border-radius:0px;"></div>
<div class="t" style="left:76.00px;top:607.11px;font-size:16.90px;color:#3a3a41;font-family:'Liberation Mono',monospace;font-weight:400;">can contribute to greater productivity.</div>
<div class="t" style="left:39.26px;top:630.13px;font-size:16.90px;color:#a1a1aa;font-family:'Liberation Mono',monospace;font-weight:400;">6</div>
<div class="r" style="left:76.00px;top:649.70px;width:577.98px;height:19.30px;background:#d5f7de;border-radius:0px;"></div>
<div class="t" style="left:76.00px;top:653.16px;font-size:16.90px;color:#3a3a41;font-family:'Liberation Mono',monospace;font-weight:400;">3. **Technology Adoption**: The shift to remote work has </div>
<div class="t" style="left:39.26px;top:653.16px;font-size:16.90px;color:#a1a1aa;font-family:'Liberation Mono',monospace;font-weight:400;">7</div>
<div class="r" style="left:76.00px;top:672.72px;width:608.40px;height:19.30px;background:#d5f7de;border-radius:0px;"></div>
<div class="t" style="left:76.00px;top:676.18px;font-size:16.90px;color:#3a3a41;font-family:'Liberation Mono',monospace;font-weight:400;">accelerated the adoption of digital tools and platforms for </div>
<div class="r" style="left:76.00px;top:695.75px;width:628.68px;height:19.30px;background:#d5f7de;border-radius:0px;"></div>
<div class="t" style="left:76.00px;top:699.21px;font-size:16.90px;color:#3a3a41;font-family:'Liberation Mono',monospace;font-weight:400;">communication and collaboration. This trend has allowed teams </div>
<div class="r" style="left:76.00px;top:718.78px;width:638.82px;height:19.30px;background:#d5f7de;border-radius:0px;"></div>
<div class="t" style="left:76.00px;top:722.23px;font-size:16.90px;color:#3a3a41;font-family:'Liberation Mono',monospace;font-weight:400;">to maintain productivity levels despite being physically apart.</div>
<div class="t" style="left:39.26px;top:745.26px;font-size:16.90px;color:#a1a1aa;font-family:'Liberation Mono',monospace;font-weight:400;">8</div>
<div class="r" style="left:76.00px;top:764.83px;width:588.12px;height:19.30px;background:#d5f7de;border-radius:0px;"></div>
<div class="t" style="left:76.00px;top:768.28px;font-size:16.90px;color:#3a3a41;font-family:'Liberation Mono',monospace;font-weight:400;">4. **Employee Retention**: Companies offering remote work </div>
<div class="t" style="left:39.26px;top:768.28px;font-size:16.90px;color:#a1a1aa;font-family:'Liberation Mono',monospace;font-weight:400;">9</div>
<div class="r" style="left:76.00px;top:787.85px;width:618.54px;height:19.30px;background:#d5f7de;border-radius:0px;"></div>
<div class="t" style="left:76.00px;top:791.31px;font-size:16.90px;color:#3a3a41;font-family:'Liberation Mono',monospace;font-weight:400;">options see higher retention rates. Employees appreciate the </div>
<div class="r" style="left:76.00px;top:810.88px;width:638.82px;height:19.30px;background:#d5f7de;border-radius:0px;"></div>
<div class="t" style="left:76.00px;top:814.33px;font-size:16.90px;color:#3a3a41;font-family:'Liberation Mono',monospace;font-weight:400;">flexibility, which can lead to reduced turnover and associated </div>
<div class="r" style="left:76.00px;top:833.90px;width:60.84px;height:19.30px;background:#d5f7de;border-radius:0px;"></div>
<div class="t" style="left:76.00px;top:837.36px;font-size:16.90px;color:#3a3a41;font-family:'Liberation Mono',monospace;font-weight:400;">costs.</div>
<div class="t" style="left:29.12px;top:860.38px;font-size:16.90px;color:#a1a1aa;font-family:'Liberation Mono',monospace;font-weight:400;">10</div>
<div class="r" style="left:76.00px;top:879.95px;width:608.40px;height:19.30px;background:#d5f7de;border-radius:0px;"></div>
<div class="t" style="left:76.00px;top:883.41px;font-size:16.90px;color:#3a3a41;font-family:'Liberation Mono',monospace;font-weight:400;">5. **Hybrid Models**: Many organizations are moving towards </div>
<div class="t" style="left:29.12px;top:883.41px;font-size:16.90px;color:#a1a1aa;font-family:'Liberation Mono',monospace;font-weight:400;">11</div>
<div class="r" style="left:76.00px;top:902.97px;width:628.68px;height:19.30px;background:#d5f7de;border-radius:0px;"></div>
<div class="t" style="left:76.00px;top:906.43px;font-size:16.90px;color:#3a3a41;font-family:'Liberation Mono',monospace;font-weight:400;">hybrid work models, combining remote and in-office work. This </div>
<div class="r" style="left:76.00px;top:926.00px;width:638.82px;height:19.30px;background:#d5f7de;border-radius:0px;"></div>
<div class="t" style="left:76.00px;top:929.46px;font-size:16.90px;color:#3a3a41;font-family:'Liberation Mono',monospace;font-weight:400;">trend balances the benefits of remote work with the advantages </div>
<div class="r" style="left:76.00px;top:949.03px;width:273.78px;height:19.30px;background:#d5f7de;border-radius:0px;"></div>
<div class="t" style="left:76.00px;top:952.48px;font-size:16.90px;color:#3a3a41;font-family:'Liberation Mono',monospace;font-weight:400;">of in-person collaboration.</div>
<div class="t" style="left:29.12px;top:975.51px;font-size:16.90px;color:#a1a1aa;font-family:'Liberation Mono',monospace;font-weight:400;">12</div>
</div>
<div class="r" style="left:1991.40px;top:1109.70px;width:37.00px;height:37.60px;background:#fff;border-radius:9px;border:1.3px solid #e4e4e7;box-sizing:border-box;"></div>
<svg class="r" style="left:2003.00px;top:1122.00px;" width="14.00" height="12.00" viewBox="0 0 14 12" fill="none"><path d="M1 2.3h12M1 6.4h12M1 10.5h12" stroke="#3f3f46" stroke-width="1.5" stroke-linecap="round"/></svg>
</body></html>
